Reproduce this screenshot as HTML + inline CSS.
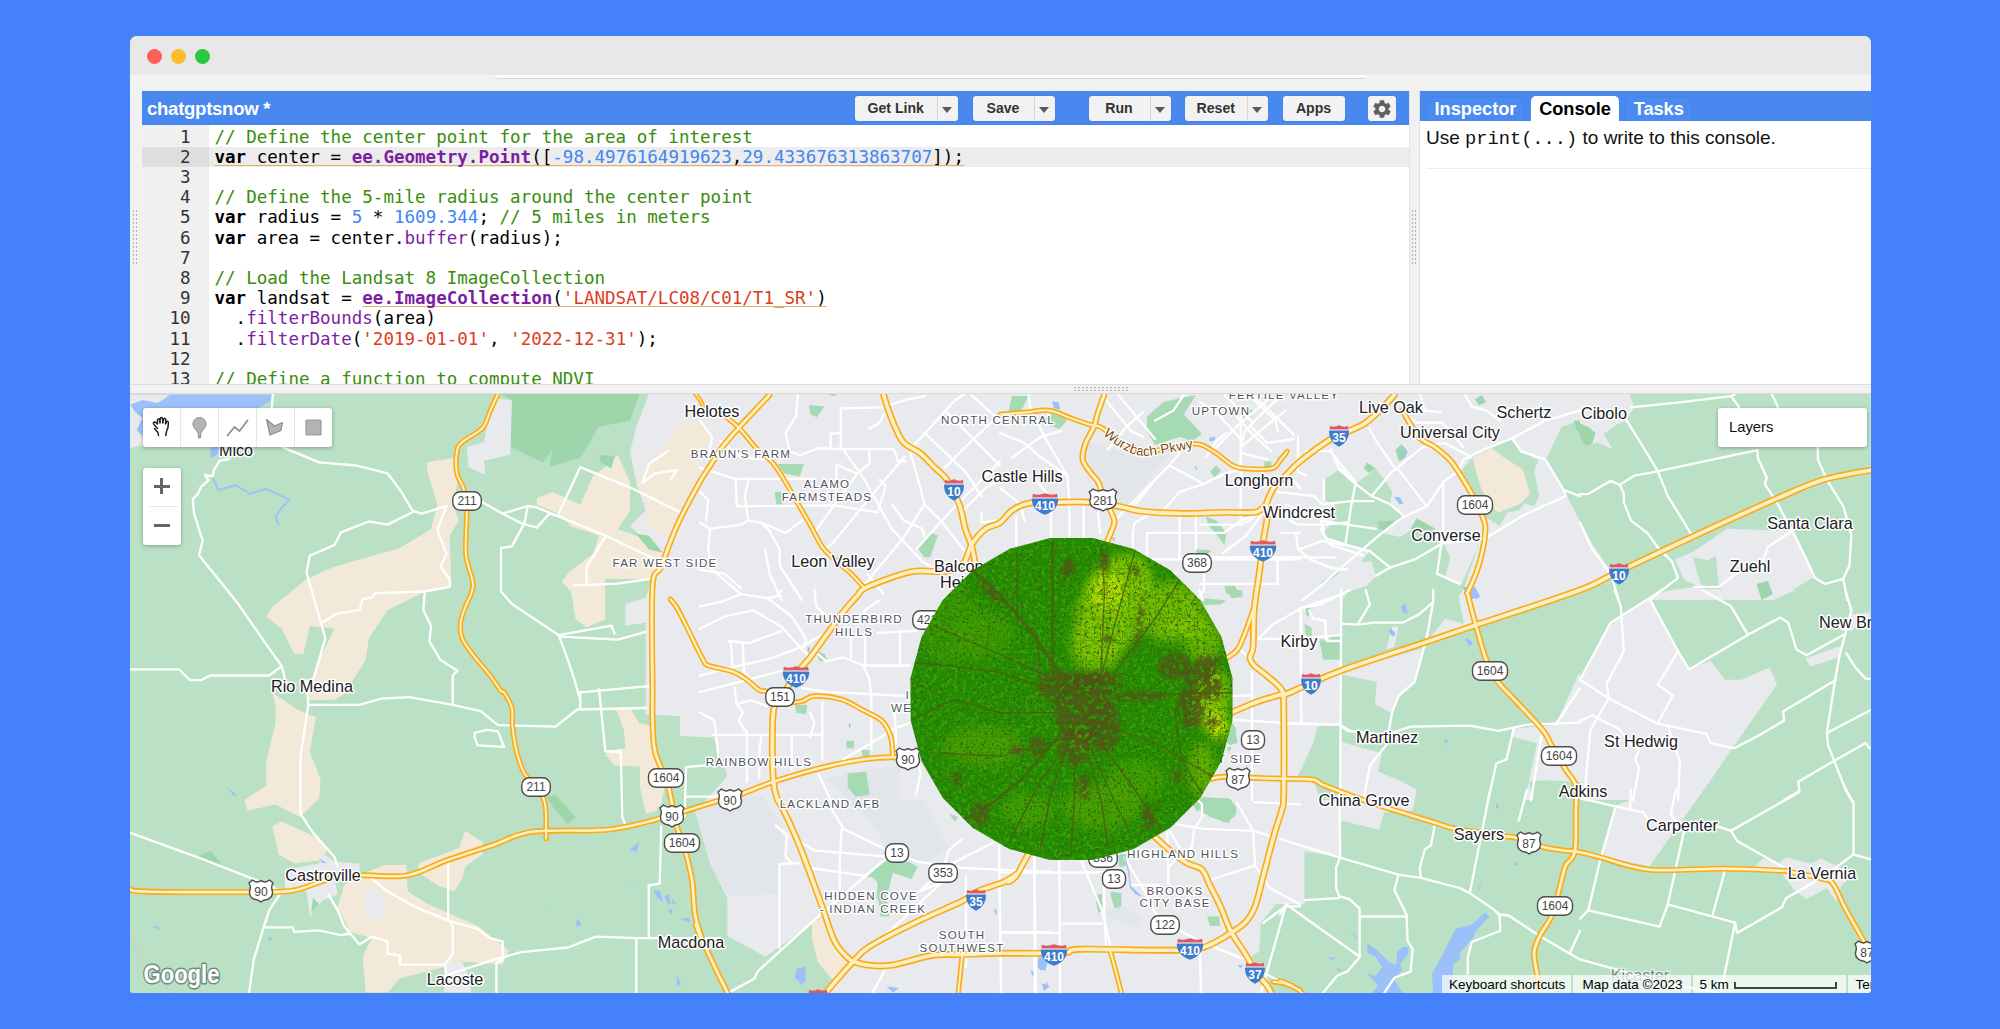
<!DOCTYPE html>
<html><head><meta charset="utf-8"><title>Earth Engine Code Editor</title>
<style>
*{box-sizing:border-box}
html,body{margin:0;padding:0}
body{width:2000px;height:1029px;overflow:hidden;background:#4481fa;font-family:"Liberation Sans",sans-serif;position:relative}
.abs{position:absolute}
#win{position:absolute;left:129.5px;top:36px;width:1741px;height:957px;border-radius:7px 7px 4px 4px;overflow:hidden;background:#f1f1f1}
#titlebar{position:absolute;left:0;top:0;width:100%;height:39px;background:#e8e8e8}
.tl{position:absolute;top:13px;width:15px;height:15px;border-radius:50%}
#urlbar{position:absolute;left:365.5px;top:38.5px;width:871px;height:4.2px;border-radius:0 0 9px 9px;background:#fff;border-bottom:1px solid #d6d6d6;}
#strip{position:absolute;left:0;top:39px;width:100%;height:15px;background:#f2f2f2}
#lhead{position:absolute;left:12px;top:54.5px;width:1267px;height:34.5px;background:#4888ef}
#lhead .title{position:absolute;left:5.5px;top:7.5px;font-weight:bold;font-size:18.6px;color:#fff;letter-spacing:-0.3px}
.btn{position:absolute;top:5px;height:25.5px;background:#f2f2f2;border-radius:3px;font-weight:bold;font-size:14.1px;color:#333;line-height:25.5px;box-shadow:0 0 1px rgba(0,0,0,.25)}
.btn span.t{position:absolute;left:0;top:0;text-align:center}
.btn i.d{position:absolute;top:0;width:1px;height:100%;background:#d4d4d4}
.btn i.a{position:absolute;top:11px;width:0;height:0;border-left:5px solid transparent;border-right:5px solid transparent;border-top:6px solid #5a5a5a}
#code{position:absolute;left:12px;top:89px;width:1267px;height:259px;background:#fff;overflow:hidden}
#gutter{position:absolute;left:0;top:0;width:67px;height:100%;background:#f0f0f0}
#activeline{position:absolute;left:67px;top:21.5px;width:1200px;height:20.2px;background:#ececec}
#activegut{position:absolute;left:0;top:21.5px;width:67px;height:20.2px;background:#dedede}
pre{margin:0}
#nums{position:absolute;left:0;top:1.6px;width:49px;text-align:right;font-family:"DejaVu Sans Mono",monospace;font-size:17.54px;line-height:20.2px;color:#333}
#src{position:absolute;left:73px;top:1.6px;font-family:"DejaVu Sans Mono",monospace;font-size:17.54px;line-height:20.2px;color:#000}
.c{color:#388d0b}.k{font-weight:bold}.f{color:#7b1fa2}.fb{color:#7b1fa2;font-weight:bold}.n{color:#4285f4}.s{color:#dd3c22}
.u{text-decoration:underline;text-decoration-color:#e3b25a;text-decoration-thickness:1.3px;text-underline-offset:2.2px;text-decoration-skip-ink:none}
#vsplit{position:absolute;left:1279px;top:54px;width:11.5px;height:294px;background:#f1f1f1;border-left:1px solid #e2e2e2;border-right:1px solid #e2e2e2}
#rhead{position:absolute;left:1290.5px;top:54.5px;width:451px;height:30.5px;background:#4888ef}
.tab{position:absolute;top:5.5px;height:25px;border-radius:5px 5px 0 0;font-weight:bold;font-size:18.2px;line-height:24px;text-align:center;color:#fff;background:#4b8bf0;border:1px solid #4283ec;border-bottom:none}
.tab.on{background:#fff;color:#000;border-color:#fff}
#rbody{position:absolute;left:1290.5px;top:85px;width:451px;height:263px;background:#fff}
#hsplit{position:absolute;left:0;top:348px;width:100%;height:9.5px;background:#f1f1f1;border-top:1px solid #dcdcdc;border-bottom:1px solid #dadada}
#map{position:absolute;left:0;top:357.5px;width:1741px;height:599.5px;background:#e8eaed;overflow:hidden}
.ctl{position:absolute;background:#fff;border-radius:3px;box-shadow:0 1px 4px rgba(0,0,0,.3)}
</style></head><body>
<div id="win">
 <div id="titlebar"></div>
 <div id="strip"></div>
 <div id="urlbar"></div>
 <div class="tl" style="left:17px;background:#fe5f57"></div>
 <div class="tl" style="left:41.5px;background:#febc2e"></div>
 <div class="tl" style="left:65.5px;background:#28c840"></div>
 <div id="lhead"><div class="title">chatgptsnow *</div>
  <div class="btn" style="left:713.5px;width:102.5px"><span class="t" style="width:81.5px">Get Link</span><i class="d" style="left:81.5px"></i><i class="a" style="left:87px"></i></div>
  <div class="btn" style="left:831px;width:82px"><span class="t" style="width:61px">Save</span><i class="d" style="left:61px"></i><i class="a" style="left:66.5px"></i></div>
  <div class="btn" style="left:947px;width:82px"><span class="t" style="width:61px">Run</span><i class="d" style="left:61px"></i><i class="a" style="left:66.5px"></i></div>
  <div class="btn" style="left:1043.5px;width:82.5px"><span class="t" style="width:61.5px">Reset</span><i class="d" style="left:61.5px"></i><i class="a" style="left:67px"></i></div>
  <div class="btn" style="left:1141px;width:62px"><span class="t" style="width:62px">Apps</span></div>
  <div class="btn" style="left:1226px;width:28px"><svg class="abs" style="left:3px;top:2px" width="22" height="22" viewBox="0 0 24 24"><path fill="#5f5f5f" d="M19.14 12.94c.04-.3.06-.61.06-.94 0-.32-.02-.64-.07-.94l2.03-1.58a.49.49 0 0 0 .12-.61l-1.92-3.32a.488.488 0 0 0-.59-.22l-2.39.96c-.5-.38-1.03-.7-1.62-.94l-.36-2.54a.484.484 0 0 0-.48-.41h-3.84c-.24 0-.43.17-.47.41l-.36 2.54c-.59.24-1.13.57-1.62.94l-2.39-.96c-.22-.08-.47 0-.59.22L2.74 8.87c-.12.21-.08.47.12.61l2.03 1.58c-.05.3-.09.63-.09.94s.02.64.07.94l-2.03 1.58a.49.49 0 0 0-.12.61l1.92 3.32c.12.22.37.29.59.22l2.39-.96c.5.38 1.03.7 1.62.94l.36 2.54c.05.24.24.41.48.41h3.84c.24 0 .44-.17.47-.41l.36-2.54c.59-.24 1.13-.56 1.62-.94l2.39.96c.22.08.47 0 .59-.22l1.92-3.32c.12-.22.07-.47-.12-.61l-2.01-1.58zM12 15.6c-1.98 0-3.6-1.62-3.6-3.6s1.62-3.6 3.6-3.6 3.6 1.62 3.6 3.6-1.62 3.6-3.6 3.6z"/></svg></div>
 </div>
 <div id="code">
  <div id="gutter"></div><div id="activeline"></div><div id="activegut"></div>
<pre id="nums">1
2
3
4
5
6
7
8
9
10
11
12
13</pre>
<pre id="src"><span class="c">// Define the center point for the area of interest</span>
<span class="u"><span class="k">var</span> center = <span class="fb">ee.Geometry.Point</span>([<span class="n">-98.4976164919623</span>,<span class="n">29.433676313863707</span>]);</span>

<span class="c">// Define the 5-mile radius around the center point</span>
<span class="k">var</span> radius = <span class="n">5</span> * <span class="n">1609.344</span>; <span class="c">// 5 miles in meters</span>
<span class="k">var</span> area = center.<span class="f">buffer</span>(radius);

<span class="c">// Load the Landsat 8 ImageCollection</span>
<span class="k">var</span> landsat = <span class="u"><span class="fb">ee.ImageCollection</span>(<span class="s">'LANDSAT/LC08/C01/T1_SR'</span>)</span>
  .<span class="f">filterBounds</span>(area)
  .<span class="f">filterDate</span>(<span class="s">'2019-01-01'</span>, <span class="s">'2022-12-31'</span>);

<span class="c">// Define a function to compute NDVI</span></pre>
 </div>
 <div id="vsplit"></div>
 <div id="rhead">
  <div class="tab" style="left:6px;width:99px">Inspector</div>
  <div class="tab on" style="left:111px;width:88px">Console</div>
  <div class="tab" style="left:204.5px;width:68.5px">Tasks</div>
 </div>
 <div id="rbody">
  <div class="abs" style="left:6px;top:6px;font-size:19px;white-space:nowrap;color:#111">Use <span style="font-family:'Liberation Mono',monospace;font-size:18.7px">print(...)</span> to write to this console.</div>
  <div class="abs" style="left:6px;top:47px;width:445px;height:1px;background:#ececec"></div>
 </div>
 <div id="hsplit"></div>
 <div class="abs" style="left:943px;top:350px;width:56px;height:6px;background-image:radial-gradient(circle,#b4b4b4 0.9px,transparent 1.1px);background-size:4px 3px"></div>
 <div class="abs" style="left:2.5px;top:173px;width:6px;height:56px;background-image:radial-gradient(circle,#b4b4b4 0.9px,transparent 1.1px);background-size:3px 4px"></div>
 <div class="abs" style="left:1281.5px;top:173px;width:6px;height:56px;background-image:radial-gradient(circle,#b4b4b4 0.9px,transparent 1.1px);background-size:3px 4px"></div>
 <div id="map">
<svg class="abs" style="left:-129.5px;top:-393.5px" width="2000" height="1029" viewBox="0 0 2000 1029">
<g id="land">
<polygon points="120,394 648.8,394 636.3,426.7 630.1,451.5 636.3,482.6 645.7,510.6 630.1,526.2 661.2,554.2 651.9,579.1 645.7,597.7 625.4,604 625.4,625.7 645.7,622.6 645.7,714.4 679.9,715.9 679.9,736.1 720,737.7 712.9,736.4 727.4,775.8 695.4,812.2 710,863.2 727.4,898.2 727.4,936.1 765.3,956.5 812,924.4 814.9,918.6 826.5,918.6 849.9,962.3 826.5,992.9 120,994.3" fill="#bae1c6"/>
<polygon points="129.7,394.7 171,394.7 157.5,418 142.5,445 129.7,448" fill="#e8eaed"/>
<polygon points="169.5,394.7 271.5,394.7 270,401.5 261,406 255,410.5 225,412 195,410.5 183,415 169.5,412 157.5,418 150,430 142.5,436 136.5,430 142.5,418 135,412 130.5,404.5 142.5,400 157.5,403 165,398.5" fill="#9cc0f9"/>
<polygon points="210,445.7 219.7,445.7 219,454 210.7,458.5" fill="#9cc0f9"/>
<polygon points="501,394 639.4,394 630.1,420.4 599,426.7 580.3,457.8 549.2,467.1 552.3,450 543,462.4 510.4,446.9 511.9,400.2" fill="#9ed5ab"/>
<polygon points="497.9,398.7 511.9,400.2 510.4,454.7 483.9,460.9 485.5,474.9 468.4,467.1 466.8,446.9 483.9,442.2 487,426.7" fill="#e8eaed"/>
<polygon points="426.4,462.4 454.4,457.8 457.5,482.6 452.8,504.4 459,520 449.7,535.5 451.3,585.3 424.8,591.5 387.5,610.2 368.8,638.2 365.7,659.9 344,694.2 334.6,700.1 306.6,700.1 319.1,659.9 334.6,628.8 309.7,625.7 303.5,653.7 294.2,653.7 281.7,628.8 266.2,616.4 272.4,607.1 306.6,579.1 334.6,566.6 356.4,560.4 399.9,548 431,529.3 437.3,504.4 427.9,473.3" fill="#f3e9d8"/>
<polygon points="536.8,498.2 552.3,492 580.3,504.4 592.8,476.4 605.2,467.1 617.7,454.7 630.1,482.6 630.1,510.6 617.7,529.3 636.3,535.5 664.3,554.2 655,579.1 605.2,579.1 605.2,619.5 586.6,627.3 575.7,619.5 571,591.5 561.7,582.2 567.9,572.8 592.8,554.2 599,535.5 571,526.2 558.6,513.7 536.8,504.4" fill="#f3e9d8"/>
<polygon points="679.9,420.4 707.9,426.7 709.4,439.1 698.5,460.9 695.4,482.6 679.9,504.4 683,526.2 664.3,535.5 648.8,526.2 645.7,498.2 636.3,485.8 648.8,464 667.4,442.2" fill="#f3e9d8"/>
<polygon points="636.3,534 648.8,535.5 662.8,552.6 648.8,549.5" fill="#9ed5ab"/>
<polygon points="599,454.7 614.6,456.2 611.4,468.6 600.6,462.4" fill="#9ed5ab"/>
<polygon points="272.4,692.4 297.3,709.5 316,717.3 309.7,751.5 320.6,779.5 319.1,798.2 300.4,816.9 275.5,804.4 247.5,810.6 244.4,799.8 266.2,785.8 266.2,760.9 275.5,723.5 275.5,704.9" fill="#f3e9d8"/>
<polygon points="272.4,826.2 281.7,821.5 319.1,838.6 326.8,851.1 319.1,860.4 294.2,863.5 278.6,854.2" fill="#f3e9d8"/>
<polygon points="418.6,863.5 459,848 465.3,830.9 482.4,841.7 482.4,854.2 465.3,866.6 462.1,879.1 454.4,891.5 437.3,885.3 418.6,872.8" fill="#f3e9d8"/>
<polygon points="365.7,872.8 384.4,865.1 406.2,865.1 407.7,891.5 427.9,904 455.9,916.4 477.7,925.7 493.3,938.2 508.8,950.6 502.6,964.6 462.1,961.5 446.6,966.2 399.9,978.6 387.5,992.6 365.7,992.6 362.6,956.8 371.9,938.2 350.2,931.9 337.7,907.1 344,885.3" fill="#f3e9d8"/>
<polygon points="616.1,709.5 630.1,708 648.8,739.1 658.1,760.9 667.4,773.3 661.2,804.4 648.8,813.7 645.7,804.4 655,782.6 648.8,767.1 614.6,765.5 605.2,754.7 611.4,750 625.4,748.4 623.9,729.8" fill="#f3e9d8"/>
<polygon points="284.9,869.7 319.1,863.5 322.2,852.6 334.6,862 359.5,863.5 359.5,876 334.6,879.1 337.7,894.6 322.2,900.8 309.7,916.4 306.6,891.5 284.9,888.4" fill="#e8eaed"/>
<polygon points="364.2,890 375.1,889 385.9,897.7 382.8,919.5 364.2,917.9" fill="#e8eaed"/>
<polygon points="445,963 462.1,961.5 468.4,975.5 471.5,992.6 443.5,992.6 446.6,978.6" fill="#e8eaed"/>
<polygon points="546.1,796.6 555.5,795.1 575.7,816.9 567.9,824.6 555.5,810.6" fill="#9ed5ab"/>
<polygon points="199.3,855.7 210.2,851.1 222.6,865.1 213.3,862" fill="#9ed5ab"/>
<polygon points="312.8,897.7 319.1,904 311.3,913.3" fill="#9ed5ab"/>
<polygon points="630.1,849.5 639.4,841.7 636.3,852.6" fill="#9cc0f9"/>
<polygon points="653.4,891.5 659.7,890 662.8,902.4" fill="#9cc0f9"/>
<polygon points="664.3,896.2 669.9,894.6 669,905.5" fill="#9cc0f9"/>
<polygon points="672.1,899.3 676.8,904 671.2,903.3" fill="#9cc0f9"/>
<polygon points="679.9,919.5 689.2,917.9 690.8,922.6" fill="#9cc0f9"/>
<polygon points="577.2,917.9 581.9,925.7 575.7,925.7" fill="#9cc0f9"/>
<polygon points="544.6,908.6 553.9,911.7 549.2,909.5" fill="#9cc0f9"/>
<polygon points="151.1,925.7 159.8,927.3 158.9,929.5" fill="#9cc0f9"/>
<polygon points="227.3,787.3 236.6,795.1 233.5,795.7" fill="#9cc0f9"/>
<polygon points="676.8,977 681.4,984.8 677.4,986.4" fill="#9cc0f9"/>
<polygon points="267.7,937.5 271.8,936.6 270.9,941.9" fill="#9cc0f9"/>
<polygon points="627,885.3 637.9,887.8 630.1,886.5" fill="#9cc0f9"/>
<polygon points="319.1,857.9 326.8,863.5 322.2,862.9" fill="#9cc0f9"/>
<polygon points="812,921.5 826.5,917.1 844,956.5 849.9,962.3 832.4,979.8 817.8,962.3 812,939" fill="#f3e9d8"/>
<polygon points="640,723.3 651.7,726.2 657.5,758.3 651.7,787.4 657.5,810.8 645.8,813.7 640,787.4" fill="#f3e9d8"/>
<polygon points="695.4,812.2 736.2,796.2 762.4,796.2 779.9,822.4 785.7,857.4 779.9,863.2 779.3,893.8 728.9,896.7 710,863.2" fill="#e2e5ea"/>
<polygon points="884.8,767 900,767 900,851.6 881.9,837 870.3,822.4 844,796.2 826.5,778.7" fill="#e2e5ea"/>
<polygon points="653.1,889.4 660.4,893.8 663.3,901.1 657.5,898.2" fill="#9cc0f9"/>
<polygon points="664.8,895.3 669.1,898.2 670.6,904 666.8,902.6" fill="#9cc0f9"/>
<polygon points="667.7,911.3 672.6,908.4 671.5,914.2" fill="#9cc0f9"/>
<polygon points="683.7,917.1 689.5,920.1 688.1,923" fill="#9cc0f9"/>
<polygon points="676.4,975.4 680.8,982.7 677.3,985.6" fill="#9cc0f9"/>
<polygon points="795.9,972.5 804.7,966.7 806.1,979.8 800.3,985.6" fill="#9cc0f9"/>
<polygon points="808.9,404.9 824.4,406.4 816.6,417.3 810.4,414.2" fill="#a5dab3"/>
<polygon points="777.8,464 804.2,464 799.5,476.4 784,473.3" fill="#a5dab3"/>
<polygon points="774.7,492 784,492 782.4,504.4 776.2,504.4" fill="#a5dab3"/>
<polygon points="917.7,548 930.2,532.4 937.9,535.5 930.2,557.3 924,557.3" fill="#a5dab3"/>
<polygon points="815.1,650.6 824.4,653.7 827.5,659.9 819.8,661.5" fill="#a5dab3"/>
<polygon points="827.5,394 836.9,394 833.7,396.2" fill="#a5dab3"/>
<polygon points="700,426.7 709.3,432.9 706.2,445.3 700,446.9" fill="#f3e9d8"/>
<polygon points="807.3,646.9 810.4,647.5 808.2,653.1" fill="#9cc0f9"/>
<polygon points="1087.8,443.1 1114.3,449.2 1142.9,459.4 1173.5,451.2 1155.1,471.6 1142.9,488 1130.6,504.3 1118.4,506.3 1114.3,492 1098,479.8 1085.7,459.4" fill="#e2e5ea"/>
<polygon points="1146.9,416.5 1163.3,402.2 1179.6,398.2 1195.9,395.1 1183.7,414.5 1202,433.9 1191.8,441 1179.6,436.9 1155.1,445.1 1146.9,430.8" fill="#a5dab3"/>
<polygon points="1040.8,422.7 1053.1,412.4 1067.3,420.6 1059.2,428.8" fill="#a5dab3"/>
<polygon points="1012.2,396.1 1028.6,396.1 1020.4,412.4 1008.2,412.4" fill="#a5dab3"/>
<polygon points="1210.2,471.6 1216.3,465.5 1221.4,470.6 1214.3,477.8" fill="#a5dab3"/>
<polygon points="1206.1,516.5 1216.3,520.6 1226.5,532.9 1224.5,545.1 1218.4,536.9 1208.2,524.7" fill="#a5dab3"/>
<polygon points="1264.3,461.4 1271.4,461.4 1271.4,467.6 1264.3,467.6" fill="#a5dab3"/>
<polygon points="1195.9,549.2 1212.2,550.2 1206.1,555.3 1196.9,554.3" fill="#a5dab3"/>
<polygon points="1224.5,585.9 1234.7,585.9 1240.8,596.1 1226.5,594.1" fill="#a5dab3"/>
<polygon points="1242.9,412.4 1253.1,409.4 1251,416.5 1243.9,420.6" fill="#a5dab3"/>
<polygon points="1110.2,536.9 1115.3,538 1114.3,542" fill="#a5dab3"/>
<polygon points="1052,401.2 1058.2,402.2 1060.2,409.4 1054.1,408.4" fill="#9cc0f9"/>
<polygon points="1209.2,438 1215.3,436.5 1214.7,440.6 1209.8,441.4" fill="#9cc0f9"/>
<polygon points="1193.9,465.1 1197.6,468.6 1196.3,470" fill="#9cc0f9"/>
<polygon points="794.9,704.9 807.3,704.9 805.8,714.2 796.4,712.7" fill="#a5dab3"/>
<polygon points="846.2,740.7 854,740.7 854,748.4 846.8,748.4" fill="#a5dab3"/>
<polygon points="861.7,750 869.5,750 869.5,756.2 862.4,756.2" fill="#a5dab3"/>
<polygon points="847.7,773.3 866.4,771.8 869.5,795.1 855.5,796.6 847.7,787.3" fill="#a5dab3"/>
<polygon points="868,872.8 889.7,858.8 917.7,866.6 911.5,879.1 892.8,872.8 886.6,897.7 889.7,916.4 880.4,916.4 877.3,882.2" fill="#a5dab3"/>
<polygon points="1200.8,798.2 1228.8,798.2 1236.5,807.5 1228.8,823.1 1210.1,816.9 1200.8,810.6" fill="#a5dab3"/>
<polygon points="1095,894.6 1101.2,894.6 1102.8,910.2 1098.1,913.3" fill="#a5dab3"/>
<polygon points="1110.6,891.5 1119.9,893.1 1121.5,907.1 1115.2,910.2" fill="#a5dab3"/>
<polygon points="1207,916.4 1219.4,916.4 1219.4,925.7 1210.1,925.7" fill="#a5dab3"/>
<polygon points="1228.8,717.3 1236.5,729.8 1231.9,745.3 1225.7,742.2" fill="#a5dab3"/>
<polygon points="1119.9,854.2 1126.1,854.2 1124.6,866.6 1118.4,866.6" fill="#a5dab3"/>
<polygon points="1191.4,802.9 1200.8,802.9 1197.7,812.2" fill="#a5dab3"/>
<polygon points="948.8,813.7 958.2,816.9 955.1,821.5" fill="#a5dab3"/>
<polygon points="1259.9,925.7 1278.5,904 1300,907.1 1300,992.6 1278.5,992.6 1256.8,959.9 1269.2,944.4" fill="#bae1c6"/>
<polygon points="848.7,723.5 850.9,724.2 849.3,729.8" fill="#9cc0f9"/>
<polygon points="1039,956.8 1048.4,958.4 1045.3,970.8 1037.5,967.7" fill="#9cc0f9"/>
<polygon points="1031.3,970.8 1035.9,972.4 1032.8,976.1" fill="#9cc0f9"/>
<polygon points="1129.2,885.3 1133.9,888.4 1141.7,896.2 1135.5,894.6" fill="#9cc0f9"/>
<polygon points="993.9,909.5 997,910.2 996.1,915.8" fill="#9cc0f9"/>
<polygon points="886.6,986.4 899.1,987.9 892.8,992.6" fill="#9cc0f9"/>
<polygon points="1042.1,983.3 1049.9,986.4 1043.7,991" fill="#9cc0f9"/>
<polygon points="796.4,969.3 805.8,966.2 804.2,983.3 794.9,978.6" fill="#9cc0f9"/>
<polygon points="1459.6,473.7 1471.8,457.3 1492.2,448.2 1510.6,439 1520.8,451.2 1538.2,460.4 1547.3,457.3 1561.6,426.7 1580,420.6 1580,423.7 1588.2,426.7 1595.3,432.9 1592.2,445.1 1596.3,442 1612.7,449.2 1603.5,433.9 1616.7,424.7 1626.9,420.6 1634.1,406.3 1629,394.1 1870.8,394.1 1870.8,993.1 1280,993.1 1280,904.3 1304.5,904.3 1304.5,851.2 1340.2,857.3 1341.2,820.6 1379,829.8 1384.1,812.4 1412.7,810.4 1416.7,790 1402.4,781.8 1378,771.6 1382,753.3 1341.2,742 1341.2,659.4 1322.9,659.4 1319.8,639 1341.2,639 1343.3,590 1343.3,600 1347.3,592 1366.7,585.9 1375.9,575.7 1371.8,561.4 1360.6,561.4 1369.8,551.2 1347.3,545.1 1329,539 1323.9,530.8 1333.1,522.7 1335.1,504.3 1323.9,500.2 1323.9,479.8 1339.2,469.6 1355.5,483.9 1371.8,471.6 1375.9,469.6 1386.1,481.8 1392.2,492 1390.2,504.3 1404.5,516.5 1400.4,520.6 1390.2,524.7 1382,532.9 1400.4,536.9 1412.7,528.8 1416.7,518.6 1435.1,528.8 1435.1,541 1443.3,543.1 1450.4,557.3 1445.3,577.8 1461.6,583.9 1484.1,532.9 1486.1,517.6 1475.9,504.3 1469.8,488" fill="#bae1c6"/>
<polygon points="1538.2,460.9 1544.4,457.8 1566.2,495.1 1591,541.7 1609.7,569.7 1619,574.4 1472.8,628.8 1460.4,599.3 1469.1,572.8 1477.8,548 1481.6,526.2 1482.2,510.6" fill="#e8eaed"/>
<polygon points="1341.2,671.6 1422.9,648.2 1420.8,659.4 1414.7,681.8 1398.4,696.1 1392.2,713.5 1374.9,704.3 1376.9,681.8 1341.2,674.7" fill="#e8eaed"/>
<polygon points="1386.1,649.2 1392.2,626.7 1398.4,626.7 1394.3,647.1" fill="#e8eaed"/>
<polygon points="1430,638 1445.3,618.6 1463.7,623.7 1458.6,596.1 1463.7,590 1575.9,590 1473.9,625.7" fill="#e8eaed"/>
<polygon points="1555.5,724.7 1580,671.6 1580,774.7 1568.8,777.8 1529,781.8 1533.1,800 1524.9,800 1537.1,743.1 1512.7,736.9 1512.7,728.8" fill="#e8eaed"/>
<polygon points="1649.4,598.2 1678,651.2 1689.2,669.6 1710.6,660.4 1724.9,679.8 1741.2,679.8 1769.8,667.6 1776.9,683.9 1771.8,692 1696.3,800 1580,800 1580,677.8 1610.6,622.7" fill="#e8eaed"/>
<polygon points="1606.5,790 1702.4,790 1649.4,866.5 1602.4,856.3 1615.7,806.3 1630,808.4 1632,798.2 1606.5,795.1" fill="#e8eaed"/>
<polygon points="1556.8,720.4 1591,715.8 1609.7,698.7 1609.7,680 1715.5,680 1715.5,773.3 1650.1,865.1 1603.5,854.2 1614.4,806 1631.5,799.8 1591,782.6 1531.9,779.5 1541.3,736" fill="#e8eaed"/>
<polygon points="1720.8,590 1759.6,590 1763.7,598.2 1753.5,599.2 1726.9,599.2" fill="#e8eaed"/>
<polygon points="1778,590 1796.3,590 1782,596.1" fill="#e8eaed"/>
<polygon points="1805.5,658.4 1843.3,645.1 1839.2,657.3 1810.6,666.5" fill="#e8eaed"/>
<polygon points="1839.2,630.8 1849.4,614.5 1869.8,612.4 1869.8,616.5 1851.4,630.8" fill="#e8eaed"/>
<polygon points="1726.9,528.8 1792.2,530.8 1804.5,553.3 1812.7,577.8 1782,596.1 1773.9,600 1726.9,600 1720.8,588 1702.4,588 1684.1,579.8 1674.9,559.4 1694.3,551.2" fill="#e8eaed"/>
<polygon points="1693.3,557.3 1708.6,560.4 1715.7,555.3 1718.8,585.9 1702.4,588 1697.3,573.7" fill="#bae1c6"/>
<polygon points="1756.5,583.9 1767.8,580.8 1772.9,594.1 1761.6,600" fill="#9ed5ab"/>
<polygon points="1580,522.7 1592.2,549.2 1610.6,569.6 1580,581.8" fill="#e8eaed"/>
<polygon points="1647.3,600 1665.7,591 1694.3,586.9 1702.4,589 1720.8,589 1726.9,600" fill="#e8eaed"/>
<polygon points="1580,423.7 1588.2,426.7 1595.3,432.9 1592.2,443.1 1586.1,446.1 1580,436.9" fill="#9ed5ab"/>
<polygon points="1775.9,496.1 1791.2,488 1795.3,491 1779,501.2" fill="#9ed5ab"/>
<polygon points="1753.5,867.6 1763.7,858.4 1778,863.5 1786.1,857.3 1810.6,863.5 1820.8,858.4 1853.5,873.7 1841.2,885.9 1836.1,901.2 1826.9,888 1806.5,899.2 1794.3,890 1782,873.7" fill="#e8eaed"/>
<polygon points="1459.6,473.7 1471.8,457.3 1492.2,448.2 1510.6,439 1520.8,451.2 1538.2,460.4 1534.1,471.6 1539.2,496.1 1534.1,506.3 1524.9,503.3 1518.8,510.4 1507.6,512.4 1499.4,525.7 1486.1,517.6 1475.9,504.3 1469.8,488" fill="#bae1c6"/>
<polygon points="1472.9,457.3 1492.2,448.2 1503.5,457.3 1522.9,469.6 1530,494.1 1519.8,504.3 1498.4,512.4 1490.2,506.3 1481,488 1475.9,471.6" fill="#f3e9d8"/>
<polygon points="1573.9,420.6 1580,420.6 1580,432.9 1576.9,430.8" fill="#9ed5ab"/>
<polygon points="1395.3,450.2 1401.4,444.1 1407.6,451.2 1405.5,457.3 1399.4,461.4" fill="#9ed5ab"/>
<polygon points="1363.7,468.6 1366.7,462.4 1375.9,468.6 1368.8,472.7" fill="#9ed5ab"/>
<polygon points="1378,521.6 1394.3,520.6 1386.1,530.8 1379,528.8" fill="#9ed5ab"/>
<polygon points="1410.6,528.8 1416.7,518.6 1435.1,528.8 1422.9,530.8" fill="#9ed5ab"/>
<polygon points="1320.8,582.9 1338.2,570.6 1339.2,572.7 1322.9,584.9" fill="#9ed5ab"/>
<polygon points="1474.9,399.2 1482,395.1 1486.1,402.2 1479,405.3" fill="#9ed5ab"/>
<polygon points="1400.4,450.2 1406.5,451.2 1403.5,458.4" fill="#9cc0f9"/>
<polygon points="1394.3,497.1 1399.4,497.1 1403.5,503.3 1399.4,504.3" fill="#9cc0f9"/>
<polygon points="1462.7,586.9 1474.9,586.9 1480,596.1 1469.8,600" fill="#9cc0f9"/>
<polygon points="1298.4,775.7 1320.8,725.7 1339.2,726.7 1339.2,800 1320.8,800 1312.7,778.8" fill="#bae1c6"/>
<polygon points="1306.5,606.3 1310.6,607.3 1308.6,616.5 1305.5,614.5" fill="#a5dab3"/>
<polygon points="1304.5,623.7 1311.6,627.8 1311.6,636.9 1305.5,633.9" fill="#a5dab3"/>
<polygon points="1400.4,607.3 1405.5,603.3 1407.6,613.5 1403.5,612.4" fill="#9cc0f9"/>
<polygon points="1388.2,630.8 1391.2,628.8 1395.9,633.9 1392.7,636.9" fill="#9cc0f9"/>
<polygon points="1464.7,639 1467.8,638 1472.9,643.1 1469.8,646.1" fill="#9cc0f9"/>
<polygon points="1470.8,590 1475.9,590 1480,597.1 1475.9,599.2" fill="#9cc0f9"/>
<polygon points="1443.3,739 1447.8,740 1446.9,745.5" fill="#9cc0f9"/>
<polygon points="1485.1,912.4 1489.2,916.5 1475.9,930.8 1473.9,936.9 1459.6,953.3 1460.6,959.4 1453.5,963.5 1451.4,993.1 1433.1,993.1 1432,973.7 1441.2,957.3 1449.4,941 1455.5,928.8 1471.8,924.7" fill="#9cc0f9"/>
<polygon points="1366.7,943.1 1375.9,949.2 1388.2,961.4 1396.3,965.5 1397.3,952.2 1402.4,947.1 1408.6,947.1 1407.6,955.3 1400.4,963.5 1402.4,969.6 1394.3,979.8 1402.4,993.1 1371.8,993.1 1378,985.9 1367.8,973.7 1375.9,975.7 1382,967.6 1375.9,957.3 1367.8,953.3" fill="#9cc0f9"/>
<polygon points="1496.3,802.2 1499.4,808.4 1495.9,808" fill="#9cc0f9"/>
<polygon points="1514.7,860.4 1518.8,865.1 1514.7,865.1" fill="#9cc0f9"/>
<polygon points="1482,881.8 1479,891 1478,890" fill="#9cc0f9"/>
<polygon points="1326.9,957.3 1335.1,957.3 1333.5,960.4" fill="#9cc0f9"/>
<polygon points="1336.1,968 1341.2,969.6 1339.2,972" fill="#9cc0f9"/>
<polygon points="1349.4,929.8 1357.6,939 1355.5,939" fill="#9cc0f9"/>
<polygon points="1305.1,607.3 1311.2,607.3 1308.2,616.5" fill="#a5dab3"/>
<polygon points="1305.1,624.7 1311.2,628.8 1311.2,636.9 1306.1,634.9" fill="#a5dab3"/>
<polygon points="1319.4,641 1339.8,641 1339.8,659.4 1323.5,659.4" fill="#a5dab3"/>
<polygon points="1327.6,636.9 1341.8,635.9 1341.8,644.1" fill="#a5dab3"/>
<polygon points="1229.6,732.9 1235.7,732.9 1237.8,743.1 1229.6,745.1" fill="#a5dab3"/>
<polygon points="1201,598.2 1225.5,600.2 1221.4,604.3 1203.1,605.3" fill="#a5dab3"/>
<polygon points="1227.6,590 1241.8,590 1242.9,597.1 1231.6,598.2" fill="#a5dab3"/>
<polygon points="1227.6,747.1 1231.6,747.1 1228.6,753.3" fill="#a5dab3"/>
<polygon points="1191.8,802.2 1204.1,797.1 1230.6,799.2 1236.7,810.4 1234.7,816.5 1224.5,822.7 1216.3,816.5 1202,812.4" fill="#a5dab3"/>
<polygon points="1094.9,896.1 1102,894.1 1102,912.4" fill="#a5dab3"/>
<polygon points="1110.2,894.1 1121.4,893.1 1121.4,906.3 1115.3,909.4" fill="#a5dab3"/>
<polygon points="1208.2,917.6 1218.4,916.5 1220.4,925.7 1210.2,925.7" fill="#a5dab3"/>
<polygon points="1118.4,855.3 1124.5,855.3 1126.5,865.5 1119.4,866.5" fill="#a5dab3"/>
<polygon points="1317.3,726.7 1339.8,724.7 1339.8,745.1 1313.3,775.7 1296.9,776.7 1311.2,753.3" fill="#bae1c6"/>
<polygon points="1106.1,910.4 1122.4,906.3 1140.8,916.5 1138.8,928.8 1122.4,920.6 1106.1,918.6" fill="#e2e5ea"/>
<polygon points="1251,957.3 1259.2,951.2 1261.2,922.7 1275.5,904.3 1300,905.3 1300,993.1 1273.5,993.1 1265.3,973.7" fill="#bae1c6"/>
<polygon points="1037.8,958.4 1042.9,957.3 1043.9,969.6 1039.8,970.6" fill="#9cc0f9"/>
<polygon points="1030.6,971.6 1034.7,972.7 1032.7,976.7" fill="#9cc0f9"/>
<polygon points="1046.9,980.8 1043.9,990 1048,985.9" fill="#9cc0f9"/>
<polygon points="1237.8,965.5 1242.9,965.1 1240.4,968.6" fill="#9cc0f9"/>
<polygon points="866.9,876.8 886.3,860.3 909.7,862.2 917.4,867.1 911.6,875.8 896.1,868 888.3,871.9 886.3,893.3 884.4,914.7 876.6,897.2 878.6,877.8" fill="#a5dab3"/>
<polygon points="865,800 923.3,800 948.6,848.6 923.3,864.2 884.4,848.6 876.6,823.3" fill="#e2e5ea"/>
</g>
<g fill="none" stroke="#fff" stroke-width="2.3" stroke-linecap="round" stroke-linejoin="round">
<path d="M281.7 446.9 L319.1 462.4 L356.4 465.5 L387.5 473.3 L401.5 492 L412.4 510.6 L421.7 513.7 L446.6 506"/>
<path d="M229.2 459 L219.5 460.9 L213.6 470.5 L212.7 476.4 L204.9 474.9 L208.6 480.2 L200.9 487 L198.1 493.8 L192.8 499.1 L194 513.4 L202.7 540.5 L199 555.1 L205.5 563.5 L213.3 572.8 L238.2 604 L266.2 644.4 L281.7 666.2 L288 691"/>
<path d="M412.4 512.2 L387.5 524.6 L368.8 521.5 L340.8 532.4 L334.6 544.9 L309.7 555.7 L306.6 572.8 L319.1 616.4 L325.3 638.2 L319.1 659.9 L309.7 691"/>
<path d="M446.6 506 L437.3 529.3 L446.6 554.2 L440.4 566.6 L449.7 579.1 L449.7 586.8 L424.8 591.5 L375.1 593.1 L371.9 597.7 L362.6 599.3 L359.5 610.2 L337.7 613.3 L322.2 622.6"/>
<path d="M424.8 591.5 L423.3 610.2 L431 625.7 L429.5 641.3 L440.4 659.9 L457.5 670.8 L452.8 675.5 L452.8 700.1"/>
<path d="M129.3 669.3 L179.1 669.3 L190 680.2 L200.9 680.2 L210.2 675.5 L269.3 675.5 L281.7 666.2"/>
<path d="M480.8 501.3 L502.6 513.7 L527.5 506 L536.8 507.5 L605.2 535.5 L664.3 563.5"/>
<path d="M527.5 507.5 L524.4 523.1 L511.9 546.4 L501 548 L501 591.5 L511.9 604 L558.6 635.1 L611.4 625.7 L614.6 633.5"/>
<path d="M502.6 513.7 L521.2 523.1 L536.8 527.7 L549.2 513.7 L561.7 516.9"/>
<path d="M580.3 467.1 L558.6 513.7"/>
<path d="M580.3 467.1 L633.2 488.9 L683 513.7"/>
<path d="M558.6 635.1 L567.9 659.9 L574.1 678.6 L580.3 700.1"/>
<path d="M560.1 636.6 L617.7 639.7 L645.7 631.9"/>
<path d="M574.1 585.3 L617.7 583.7 L648.8 579.1"/>
<path d="M605.2 537.1 L586.6 566.6 L586.6 583.7"/>
<path d="M273 394 L271.8 408.6"/>
<path d="M667.4 451.5 L648.8 464 L642.6 482.6 L655 473.3 L676.8 470.2 L670.5 479.5"/>
<path d="M306.6 680 L308.2 704.9 L300.4 757.8 L300.4 813.7 L312.8 832.4 L334.6 857.3 L337.7 866.6"/>
<path d="M308.2 704.9 L359.5 704.9 L381.3 698.7 L409.3 697.1 L452.8 704.9 L480.8 711.1 L497.9 725.1 L555.5 726.7 L577.2 709.5 L645.7 708"/>
<path d="M452.8 680 L452.8 704.9"/>
<path d="M129.3 832.4 L197.8 857.3 L253.7 879.1 L275.5 888.4"/>
<path d="M281.7 891.5 L269.3 910.2 L263.1 928.8 L253.7 959.9 L249.1 992.6"/>
<path d="M264.6 927.3 L292.6 927.3 L294.2 931.9 L319.1 930.4 L340.8 935.1 L350.2 933.5 L359.5 944.4 L371.9 936.6 L387.5 941.3 L387.5 953.7 L399.9 955.3 L399.9 964.6 L445 964.6"/>
<path d="M368.8 876 L387.5 891.5 L415.5 907.1 L449.7 921.1 L477.7 928.8 L490.1 938.2 L502.6 941.3 L502.6 959.9 L496.4 963 L496.4 992.6"/>
<path d="M448.1 860.4 L448.1 919.5 L452.8 925.7 L452.8 953.7 L445 964.6 L446.6 978.6"/>
<path d="M445 975.5 L493.3 959.9 L521.2 952.2 L567.9 947.5 L595.9 936.6 L636.3 938.2 L720 938.2"/>
<path d="M636.3 938.2 L636.3 992.6"/>
<path d="M605.2 751.5 L620.8 751.5 L622.3 816.9 L625.4 824.6"/>
<path d="M599 689.3 L605.2 750"/>
<path d="M580.3 692.4 L580.3 708"/>
<path d="M580.3 692.4 L648.8 686.2"/>
<path d="M648.8 885.3 L659.7 883.7 L661.2 826.2"/>
<path d="M648.8 885.3 L648.8 938.2"/>
<path d="M474.6 732.9 L487 729.8 L497.9 731.3 L504.1 746.9 L477.7 745.3 L474.6 737.5 L474.6 732.9"/>
<path d="M686.1 767.1 L720 764"/>
<path d="M686.1 767.1 L684.5 816.9"/>
<path d="M686.1 796.6 L720 796.6"/>
<path d="M328.4 894.6 L337.7 910.2 L344 925.7 L350.2 933.5"/>
<path d="M1626.9 420.6 L1657.6 470.6 L1667.8 496.1 L1694.3 539"/>
<path d="M1580 494.1 L1588.2 494.1 L1610.6 480.8 L1619.8 484.9 L1623.9 494.1 L1623.9 502.2 L1631 520.6 L1647.3 532.9 L1657.6 547.1 L1671.8 561.4 L1678 577.8 L1649.4 600"/>
<path d="M1619.8 484.9 L1634.1 475.7 L1651.4 472.7 L1722.9 457.3 L1757.6 450.2 L1757.6 457.3 L1766.7 477.8 L1764.7 483.9 L1776.9 502.2 L1782 512.4 L1792.2 530.8 L1806.5 559.4 L1814.7 577.8 L1824.9 583.9 L1843.3 578.8 L1847.3 600"/>
<path d="M1817.8 447.1 L1817.8 459.4 L1826.9 479.8 L1843.3 506.3 L1851.4 534.9 L1849.4 565.5 L1843.3 578.8"/>
<path d="M1792.2 530.8 L1767.8 547.1 L1763.7 559.4 L1735.1 574.7 L1718.8 586.9 L1694.3 586.9"/>
<path d="M1631 407.3 L1682 402.2 L1731 396.1 L1735.1 394.1"/>
<path d="M1731 396.1 L1739.2 407.3"/>
<path d="M1771.8 394.1 L1778 407.3"/>
<path d="M1580 522.7 L1592.2 549.2 L1610.6 573.7 L1618.8 600"/>
<path d="M1580 679.8 L1608.6 698.2 L1657.6 723.7 L1667.8 725.7 L1706.5 733.9 L1710.6 743.1 L1734.1 748.2 L1759.6 734.9 L1784.1 720.6 L1783.1 711.4 L1836.1 679.8"/>
<path d="M1649.4 598.2 L1678 651.2 L1657.6 684.9 L1672.9 695.1 L1657.6 723.7"/>
<path d="M1614.7 590 L1620.8 606.3 L1623.9 651.2 L1606.5 683.9 L1608.6 698.2 L1590.2 730.8 L1584.1 800"/>
<path d="M1580 679.8 L1610.6 622.7 L1649.4 598.2 L1661.6 590"/>
<path d="M1678 651.2 L1689.2 669.6 L1749.4 633.9 L1780 617.6 L1788.2 622.7 L1796.3 649.2 L1806.5 655.3 L1845.3 633.9"/>
<path d="M1702.4 590 L1731 606.3 L1747.3 633.9"/>
<path d="M1845.3 590 L1851.4 610.4 L1845.3 633.9 L1839.2 657.3 L1835.1 679.8 L1826.9 732.9 L1828 745.1 L1843.3 783.9 L1851.4 800"/>
<path d="M1846.3 653.3 L1855.5 667.6 L1865.7 678.8 L1869.8 678.8"/>
<path d="M1826.9 732.9 L1869.8 710.4"/>
<path d="M1833.1 761.4 L1865.7 743.1 L1869.8 748.2"/>
<path d="M1798.4 781.8 L1833.1 761.4"/>
<path d="M1798.4 781.8 L1799.4 791 L1784.1 800"/>
<path d="M1667.8 725.7 L1680 762.4 L1678 800"/>
<path d="M1639.2 749.2 L1635.1 759.4 L1639.2 767.6 L1633.1 800"/>
<path d="M1580 720.6 L1592.2 715.5 L1618.8 728.8 L1633.1 747.1 L1639.2 749.2"/>
<path d="M1457.6 471.6 L1443.3 481.8 L1426.9 506.3 L1402.4 517.6 L1382 532.9 L1360.6 551.2 L1341.2 567.6 L1320.8 585.9 L1302.4 600"/>
<path d="M1510.6 439 L1484.1 449.2 L1463.7 459.4 L1457.6 471.6"/>
<path d="M1510.6 439 L1545.3 420.6 L1580 410.4"/>
<path d="M1443.3 481.8 L1443.3 532.9 L1441.2 545.1 L1437.1 573.7 L1459.6 583.9"/>
<path d="M1565.7 496.1 L1524.9 514.5 L1484.1 539 L1443.3 543.1 L1414.7 559.4 L1390.2 567.6 L1375.9 575.7"/>
<path d="M1355.5 483.9 L1351.4 504.3 L1345.3 545.1"/>
<path d="M1323.9 479.8 L1323.9 500.2"/>
<path d="M1512.7 439 L1520.8 451.2 L1545.3 459.4 L1563.7 490 L1580 496.1"/>
<path d="M1563.7 490 L1565.7 496.1"/>
<path d="M1339.2 469.6 L1355.5 483.9 L1371.8 496.1 L1390.2 504.3 L1404.5 516.5"/>
<path d="M1371.8 496.1 L1392.2 471.6 L1422.9 447.1 L1435.1 445.1"/>
<path d="M1398.4 469.6 L1426.9 506.3"/>
<path d="M1329 539 L1347.3 545.1 L1369.8 551.2 L1390.2 567.6"/>
<path d="M1323.9 530.8 L1320.8 520.6 L1347.3 524.7 L1375.9 528.8"/>
<path d="M1341.2 590 L1340.2 800"/>
<path d="M1365.7 590 L1369.8 604.3 L1357.6 624.7 L1341.2 623.7"/>
<path d="M1357.6 624.7 L1373.9 622.7 L1402.4 622.7 L1418.8 614.5 L1433.1 602.2 L1433.1 590"/>
<path d="M1433.1 602.2 L1426.9 636.9 L1420.8 659.4 L1414.7 681.8 L1398.4 696.1 L1392.2 712.4 L1386.1 745.1 L1369.8 765.5 L1363.7 800"/>
<path d="M1280 723.7 L1339.2 724.7 L1347.3 730.8 L1386.1 734.9 L1410.6 726.7 L1469.8 725.7 L1498.4 730.8 L1526.9 724.7 L1580 722.7"/>
<path d="M1513.7 728.8 L1506.5 759.4 L1496.3 763.5 L1488.2 800"/>
<path d="M1541.2 736.9 L1531 800"/>
<path d="M1580 688 L1555.5 724.7"/>
<path d="M1300.4 608.4 L1301.4 722.7"/>
<path d="M1300.4 608.4 L1320.8 604.3 L1341.2 594.1"/>
<path d="M1312.7 618.6 L1324.9 620.6 L1326.9 641 L1341.2 641"/>
<path d="M1280 839 L1312.7 849.2 L1339.2 857.3 L1398.4 874.7 L1420.8 877.8 L1459.6 888 L1469.8 893.1 L1492.2 908.4 L1499.4 914.5 L1508.6 915.5 L1541.2 936.9 L1580 959.4"/>
<path d="M1339.2 790 L1340.2 857.3 L1336.1 867.6 L1336.1 888 L1339.2 896.1 L1349.4 899.2 L1359.6 908.4 L1359.6 957.3 L1347.3 971.6 L1337.1 975.7 L1322.9 993.1"/>
<path d="M1304.5 900.2 L1339.2 898.2"/>
<path d="M1286.1 904.3 L1357.6 955.3"/>
<path d="M1280 914.5 L1286.1 904.3"/>
<path d="M1359.6 916.5 L1406.5 916.5"/>
<path d="M1398.4 874.7 L1394.3 890 L1406.5 914.5 L1407.6 941 L1412.7 949.2 L1410.6 971.6 L1394.3 977.8 L1384.1 993.1"/>
<path d="M1435.1 822.7 L1431 845.1 L1424.9 849.2 L1419.8 867.6 L1420.8 877.8"/>
<path d="M1490.2 790 L1484.1 820.6 L1469.8 893.1"/>
<path d="M1526.9 790 L1518.8 820.6"/>
<path d="M1499.4 914.5 L1500.4 930.8 L1471.8 942 L1467.8 957.3 L1467.8 973.7"/>
<path d="M1580 930.8 L1569.8 953.3"/>
<path d="M1615.7 806.3 L1600.4 859.4 L1588.2 910.4 L1580 918.6"/>
<path d="M1588.2 910.4 L1659.6 926.7 L1667.8 904.3 L1735.1 922.7 L1720.8 993.1"/>
<path d="M1684.1 830.8 L1667.8 904.3"/>
<path d="M1724.9 870.6 L1712.7 914.5"/>
<path d="M1735.1 922.7 L1737.1 932.9 L1782 907.3 L1786.1 898.2 L1824.9 875.7 L1853.5 854.3 L1870.8 859.4"/>
<path d="M1718.8 826.7 L1731 830.8 L1737.1 841 L1784.1 867.6"/>
<path d="M1731 830.8 L1799.4 792"/>
<path d="M1845.3 790 L1853.5 802.2 L1853.5 854.3"/>
<path d="M1580 798.2 L1606.5 804.3 L1615.7 806.3 L1643.3 812.4 L1647.3 818.6"/>
<path d="M1631 790 L1630 808.4"/>
<path d="M1675.9 790 L1670.8 814.5 L1684.1 830.8 L1718.8 826.7"/>
<path d="M1580 959.4 L1667.8 983.9 L1720.8 993.1"/>
<path d="M798 395.1 L795.9 416.5 L785.7 432.9 L789.8 451.2 L800 455.3 L818.4 448.2 L842.9 449.2 L893.9 449.2 L898 461.4 L906.1 461.4"/>
<path d="M842.9 449.2 L863.3 477.8 L883.7 514.5 L891.8 528.8 L922.4 561.4 L942.9 573.7"/>
<path d="M840.8 408.4 L883.7 407.3 L904.1 400.2 L924.5 396.1"/>
<path d="M840.8 408.4 L840.8 449.2"/>
<path d="M830.6 433.9 L840.8 432.9"/>
<path d="M830.6 433.9 L830.6 447.1"/>
<path d="M869.4 449.2 L869.4 463.5 L857.1 473.7 L836.7 464.5 L835.7 504.3"/>
<path d="M857.1 473.7 L814.3 532.9"/>
<path d="M904.1 457.3 L879.6 485.9 L832.7 543.1 L822.4 551.2"/>
<path d="M735.7 478.8 L814.3 478.8"/>
<path d="M735.7 478.8 L736.7 506.3 L834.7 505.3 L877.6 512.4 L885.7 485.9 L879.6 479.8"/>
<path d="M700 467.6 L724.5 475.7 L735.7 478.8"/>
<path d="M749 477.8 L744.9 496.1 L748 520.6 L740.8 524.7 L710.2 528.8 L708.2 549.2 L712.2 569.6 L740.8 594.1"/>
<path d="M748 520.6 L761.2 522.7 L769.4 530.8 L779.6 549.2 L779.6 565.5 L802 600"/>
<path d="M761.2 522.7 L785.7 532.9 L802 520.6"/>
<path d="M700 522.7 L710.2 528.8"/>
<path d="M700 569.6 L724.5 573.7 L740.8 588"/>
<path d="M910 451.2 L920.4 488 L924.5 504.3 L904.1 536.9 L873.5 573.7 L859.2 592"/>
<path d="M924.5 504.3 L940.8 520.6 L963.3 549.2 L971.4 553.3"/>
<path d="M891.8 504.3 L904.1 520.6 L922.4 528.8 L924.5 536.9"/>
<path d="M916.3 549.2 L955.1 506.3 L973.5 488 L1000 461.4"/>
<path d="M914.3 445.1 L955.1 400.2 L963.3 395.1"/>
<path d="M924.5 432.9 L965.3 471.6 L981.6 496.1"/>
<path d="M944.9 410.4 L1000 465.5"/>
<path d="M971.4 395.1 L1000 420.6"/>
<path d="M944.9 467.6 L973.5 439 L1000 414.5"/>
<path d="M963.3 510.4 L985.7 488 L1000 479.8"/>
<path d="M869.4 428.8 L879.6 422.7 L883.7 414.5"/>
<path d="M981.6 512.4 L981.6 522.7 L995.9 520.6"/>
<path d="M700 492 L708.2 500.2 L706.1 520.6"/>
<path d="M765.3 549.2 L769.4 573.7 L781.6 600"/>
<path d="M867.3 573.7 L883.7 594.1"/>
<path d="M700 420.6 L712.2 436.9 L708.2 457.3"/>
<path d="M720.4 441 L740.8 457.3 L765.3 459.4"/>
<path d="M1028.6 395.1 L1030.6 410.4 L1046.9 441 L1067.3 475.7 L1069.4 502.2"/>
<path d="M1000 432.9 L1024.5 443.1 L1040.8 457.3 L1067.3 475.7"/>
<path d="M1012.2 457.3 L1040.8 436.9 L1061.2 430.8"/>
<path d="M1069.4 504.3 L1069.4 536.9"/>
<path d="M1083.7 504.3 L1083.7 536.9"/>
<path d="M1098 512.4 L1100 532.9"/>
<path d="M1051 512.4 L1051 539"/>
<path d="M1016.3 516.5 L1016.3 545.1"/>
<path d="M1106.1 400.2 L1130.6 430.8 L1142.9 436.9"/>
<path d="M1118.4 395.1 L1155.1 439"/>
<path d="M1108.2 449.2 L1126.5 426.7 L1142.9 412.4"/>
<path d="M1114.3 520.6 L1142.9 492 L1169.4 465.5 L1179.6 453.3"/>
<path d="M1130.6 510.4 L1155.1 479.8 L1169.4 465.5"/>
<path d="M1169.4 465.5 L1204.1 483.9 L1179.6 492 L1163.3 510.4"/>
<path d="M1204.1 483.9 L1224.5 473.7 L1240.8 469.6"/>
<path d="M1132.7 600 L1132.7 532.9 L1134.7 522.7 L1153.1 512.4"/>
<path d="M1146.9 532.9 L1224.5 532.9 L1240.8 520.6 L1263.3 512.4"/>
<path d="M1146.9 532.9 L1146.9 573.7 L1175.5 573.7"/>
<path d="M1179.6 516.5 L1179.6 559.4"/>
<path d="M1195.9 516.5 L1195.9 549.2"/>
<path d="M1146.9 559.4 L1183.7 559.4"/>
<path d="M1212.2 559.4 L1285.7 559.4"/>
<path d="M1204.1 573.7 L1204.1 590 L1195.9 600"/>
<path d="M1222.4 553.3 L1244.9 536.9 L1263.3 512.4"/>
<path d="M1240.8 520.6 L1240.8 447.1 L1244.9 430.8 L1265.3 410.4 L1281.6 395.1"/>
<path d="M1240.8 447.1 L1265.3 426.7 L1285.7 410.4"/>
<path d="M1253.1 395.1 L1275.5 416.5 L1293.9 434.9"/>
<path d="M1236.7 416.5 L1255.1 436.9 L1271.4 451.2"/>
<path d="M1277.6 583.9 L1277.6 559.4"/>
<path d="M1285.7 504.3 L1300 510.4"/>
<path d="M1281.6 532.9 L1300 532.9"/>
<path d="M1273.5 559.4 L1300 559.4"/>
<path d="M1289.8 475.7 L1300 488"/>
<path d="M1206.1 457.3 L1216.3 441 L1226.5 432.9"/>
<path d="M1183.7 395.1 L1173.5 410.4 L1155.1 420.6"/>
<path d="M1000 488 L1020.4 504.3 L1024.5 520.6"/>
<path d="M1032.7 475.7 L1049 496.1 L1051 512.4"/>
<path d="M700 606.3 L720.4 602.2 L740.8 594.1 L767.3 598.2 L791.8 616.5 L806.1 639 L804.1 647.1"/>
<path d="M700 628.8 L724.5 616.5 L753.1 610.4 L781.6 626.7 L798 645.1 L810.2 657.3"/>
<path d="M728.6 641 L749 643.1 L781.6 630.8"/>
<path d="M700 675.7 L730.6 667.6 L767.3 659.4 L795.9 649.2 L822.4 634.9 L838.8 622.7"/>
<path d="M700 692 L755.1 677.8 L785.7 669.6"/>
<path d="M742.9 643.1 L743.9 671.6 L749 677.8"/>
<path d="M730.6 641 L732.7 667.6"/>
<path d="M802 688 L826.5 692 L910.2 696.1"/>
<path d="M814.3 651.2 L826.5 661.4 L842.9 657.3 L863.3 665.5 L869.4 679.8 L871.4 696.1 L871.4 749.2"/>
<path d="M863.3 665.5 L910.2 665.5"/>
<path d="M851 636.9 L851 657.3"/>
<path d="M865.3 634.9 L865.3 665.5"/>
<path d="M900 630.8 L900 663.5"/>
<path d="M877.6 632.9 L916.3 630.8"/>
<path d="M893.9 704.3 L895.9 732.9 L894.9 753.3"/>
<path d="M910.2 696.1 L910.2 720.6"/>
<path d="M842.9 759.4 L871.4 743.1 L893.9 728.8 L910.2 722.7"/>
<path d="M712.2 734.9 L822.4 734.9"/>
<path d="M822.4 702.2 L822.4 759.4"/>
<path d="M810.2 712.4 L814.3 722.7 L810.2 736.9"/>
<path d="M700 712.4 L714.3 720.6 L716.3 734.9 L718.4 757.3"/>
<path d="M738.8 720.6 L746.9 732.9 L746.9 781.8"/>
<path d="M761.2 736.9 L759.2 753.3 L759.2 777.8"/>
<path d="M736.7 704.3 L751 700.2 L767.3 706.3"/>
<path d="M738.8 720.6 L742.9 712.4 L736.7 704.3 L734.7 688"/>
<path d="M916.3 749.2 L920.4 773.7 L916.3 794.1"/>
<path d="M818.4 773.7 L830.6 800"/>
<path d="M791.8 736.9 L791.8 769.6"/>
<path d="M781.6 590 L777.6 596.1 L767.3 598.2"/>
<path d="M814.3 590 L816.3 606.3 L826.5 616.5"/>
<path d="M879.6 600.2 L867.3 608.4 L863.3 612.4"/>
<path d="M1000 872.7 L1095.9 872.7 L1104.1 871.6"/>
<path d="M1034.7 857.3 L1034.7 993.1"/>
<path d="M1059.2 857.3 L1060.2 993.1"/>
<path d="M1000 932.9 L1059.2 932.9"/>
<path d="M1060.2 923.7 L1102 923.7"/>
<path d="M1081.6 861.4 L1102 910.4 L1110.2 945.1"/>
<path d="M1104.1 871.6 L1104.1 912.4 L1106.1 945.1"/>
<path d="M1124.5 857.3 L1142.9 888 L1155.1 912.4 L1161.2 920.6"/>
<path d="M1130.6 884.9 L1159.2 884.9"/>
<path d="M1167.3 830.8 L1168.4 883.9"/>
<path d="M1169.4 830.8 L1191.8 867.6"/>
<path d="M1195.9 798.2 L1202 804.3 L1202 816.5 L1193.9 830.8 L1191.8 847.1 L1175.5 859.4 L1168.4 867.6"/>
<path d="M1177.6 824.7 L1204.1 828.8 L1253.1 830.8 L1273.5 836.9"/>
<path d="M1236.7 802.2 L1253.1 830.8 L1255.1 865.5 L1210.2 879.8"/>
<path d="M1255.1 865.5 L1269.4 888 L1300 904.3"/>
<path d="M1254.1 802.2 L1300 804.3"/>
<path d="M1179.6 930.8 L1204.1 943.1 L1244.9 959.4 L1265.3 973.7"/>
<path d="M1200 953.3 L1201 993.1"/>
<path d="M1261.2 992 L1285.7 906.3 L1300 906.3"/>
<path d="M1285.7 906.3 L1263.3 922.7"/>
<path d="M1265.3 973.7 L1300 992"/>
<path d="M779.4 864.2 L779.4 947.7"/>
<path d="M779.4 864.2 L798.9 863.2"/>
<path d="M775.5 825.3 L787.2 835 L785.3 856.4 L791.1 862.2"/>
<path d="M798.9 840.8 L814.4 850.5 L884.4 856.4"/>
<path d="M810.5 868 L865 875.8 L886.3 858.3"/>
<path d="M841.6 829.2 L839.7 862.2 L839.7 889.4"/>
<path d="M831.9 809.7 L843.6 829.2 L884.4 848.6 L919.4 862.2 L962.2 868 L1050 871.9"/>
<path d="M886.3 858.3 L820.2 914.7 L758 971.1 L754.2 978.8 L728.9 992.5"/>
<path d="M942.7 881.6 L884.4 936.1 L872.7 947.7"/>
<path d="M993.3 842.8 L950.5 864.2 L919.4 891.4 L942.7 881.6"/>
<path d="M962.2 838.9 L948.6 850.5 L944.7 864.2"/>
<path d="M999.1 844.7 L1001 992.5"/>
<path d="M1034.1 858.3 L1036 992.5"/>
<path d="M966 875.8 L966 967.2"/>
<path d="M1001 932.2 L1050 932.2"/>
<path d="M884.4 971.1 L872.7 992.5"/>
<path d="M1252 671.6 L1252 800"/>
<path d="M1233.7 696.1 L1252 695.1"/>
<path d="M1231.6 719.6 L1280.6 722.7 L1339.8 724.7 L1350 730.8"/>
<path d="M1301 608.4 L1301 671.6"/>
<path d="M1260.2 639 L1301 639 L1341.8 634.9"/>
<path d="M1301 608.4 L1341.8 594.1 L1350 590"/>
<path d="M1258.2 639 L1272.4 624.7 L1301 608.4"/>
<path d="M1239.8 649.2 L1252 661.4"/>
<path d="M1309.2 610.4 L1313.3 618.6 L1325.5 620.6 L1325.5 639"/>
<path d="M1199 590 L1203.1 600.2"/>
<path d="M1240.8 414.5 L1240.8 524.7"/>
<path d="M1200 557.3 L1334.7 557.3"/>
<path d="M1277.6 559.4 L1277.6 583.9 L1200 583.9"/>
<path d="M1277.6 492 L1314.3 496.1 L1322.4 504.3 L1351 501.2 L1373.5 501.2"/>
<path d="M1298 436.9 L1298 471.6 L1306.1 475.7"/>
<path d="M1306.1 451.2 L1330.6 451.2 L1355.1 481.8"/>
<path d="M1289.8 520.6 L1298 524.7 L1322.4 524.7 L1346.9 522.7"/>
<path d="M1295.9 532.9 L1298 549.2 L1310.2 559.4 L1330.6 567.6 L1346.9 569.6"/>
<path d="M1300 549.2 L1322.4 541 L1342.9 545.1"/>
<path d="M1320.4 528.8 L1330.6 545.1 L1363.3 555.3"/>
<path d="M1330.6 449.2 L1338.8 467.6 L1355.1 481.8"/>
<path d="M1369.4 428.8 L1377.6 443.1 L1395.9 469.6"/>
<path d="M1424.5 445.1 L1444.9 443.1 L1471.4 457.3"/>
<path d="M1404.1 412.4 L1416.3 422.7 L1442.9 422.7 L1463.3 447.1"/>
<path d="M1465.3 395.1 L1471.4 406.3 L1485.7 410.4 L1500 420.6"/>
<path d="M1420.4 395.1 L1424.5 410.4 L1440.8 412.4"/>
<path d="M1200 402.2 L1216.3 412.4 L1240.8 439"/>
<path d="M1212.2 451.2 L1240.8 422.7 L1267.3 400.2"/>
<path d="M1249 395.1 L1275.5 420.6 L1277.6 430.8"/>
<path d="M1224.5 395.1 L1253.1 422.7"/>
<path d="M1251 426.7 L1267.3 443.1 L1293.9 439"/>
<path d="M1242.9 453.3 L1267.3 459.4"/>
<path d="M1200 524.7 L1240.8 524.7 L1249 520.6 L1267.3 504.3"/>
</g>
<path d="M212.7 477.7 L218.3 490.1 L235.4 485.1 L250 493.8 L266.2 488.9 L289.5 499.8 L281.7 507.5 L275.5 516.9 L278.6 524.6" fill="none" stroke="#9cc0f9" stroke-width="1.8" stroke-linejoin="round"/>
<path d="M130 939 L143 962 L172 994" fill="none" stroke="#c9ced2" stroke-width="1.2"/><!--county-->
<path d="M1124.5 855.3 L1128.6 871.6 L1130.6 888 L1140.8 896.1" fill="none" stroke="#9cc0f9" stroke-width="1.2"/>
<g fill="none" stroke-linecap="round" stroke-linejoin="round">
<g stroke="#f9ab18">
<path d="M497.9 394 C496.6 396.9 492.7 405.4 490.1 411.1 C487.5 416.8 487.1 423.0 482.4 428.2 C477.7 433.4 466.4 438.3 462.1 442.2 C457.9 446.1 457.8 446.3 456.9 451.5 C456.0 456.7 455.8 467.1 456.9 473.3 C458.0 479.5 462.0 482.7 463.7 488.9 C465.4 495.1 466.4 499.7 466.8 510.6 C467.2 521.5 464.9 541.8 465.9 554.2 C466.9 566.7 473.1 576.5 473 585.3 C472.9 594.1 467.4 600.9 465.3 607.1 C463.2 613.3 461.1 617.4 460.6 622.6 C460.1 627.8 459.8 632.5 462.1 638.2 C464.4 643.9 469.9 650.6 474.6 656.8 C479.3 663.0 485.7 669.8 490.1 675.5 C494.5 681.2 498.7 688.2 501 691 C503.3 693.8 502.3 689.6 504.1 692.4 C505.9 695.2 510.5 702.3 511.9 708 C513.3 713.7 511.7 719.5 512.5 726.7 C513.3 734.0 514.6 743.7 516.6 751.5 C518.6 759.3 520.5 766.5 524.4 773.3 C528.3 780.0 536.4 786.3 539.9 792 C543.4 797.7 544.5 799.7 545.5 807.5 C546.5 815.3 546.0 833.4 546.1 838.6" stroke-width="5.3"/>
<path d="M769.4 395.1 C766.7 398.0 758.2 406.9 753.1 412.4 C748.0 417.8 743.9 422.0 738.8 427.8 C733.7 433.6 727.2 440.8 722.4 447.1 C717.6 453.4 714.2 459.3 710.2 465.5 C706.2 471.7 704.1 474.1 698.5 484.2 C692.9 494.3 683.0 512.5 676.8 526.2 C670.6 539.9 665.2 556.5 661.2 566.6 C657.2 576.7 654.0 566.1 652.5 586.8 C651.0 607.5 652.5 669.2 652.5 691 C652.5 712.8 652.1 707.2 652.5 717.3 C652.9 727.4 652.5 740.6 655 751.5 C657.5 762.4 664.5 773.8 667.4 782.6 C670.2 791.4 670.5 797.1 672.1 804.4 C673.7 811.7 674.5 817.9 676.8 826.2 C679.1 834.5 683.5 844.9 686.1 854.2 C688.7 863.5 690.8 871.8 692.3 882.2 C693.8 892.6 693.3 905.5 695.4 916.4 C697.5 927.3 704.7 946.2 704.8 947.5 C704.9 948.8 695.0 923.1 695.8 924.4 C696.6 925.7 704.2 944.3 709.4 955.5 C714.6 966.7 723.6 985.0 726.9 991.5 C730.1 998.0 728.6 993.9 728.9 994.4" stroke-width="6.1"/>
<path d="M720.4 412.4 C723.5 415.0 732.7 421.7 738.8 427.8 C744.9 433.9 751.7 443.6 757.1 449.2 C762.5 454.8 767.3 457.0 771.4 461.4 C775.5 465.8 777.5 469.2 781.6 475.7 C785.7 482.2 791.1 492.0 795.9 500.2 C800.7 508.4 805.8 516.9 810.2 524.7 C814.6 532.5 818.3 541.3 822.4 547.1 C826.5 552.9 829.9 555.0 834.7 559.4 C839.5 563.8 846.2 569.1 851 573.7 C855.8 578.3 861.2 584.7 863.3 586.9" stroke-width="5.3"/>
<path d="M670.5 599.3 C671.8 601.1 674.7 603.7 678.3 610.2 C681.9 616.7 688.1 629.9 692.3 638.2 C696.4 646.5 700.6 655.4 703.2 659.9 C705.9 664.4 703.3 663.5 708.2 665.5 C713.1 667.5 726.2 669.2 732.7 671.6 C739.2 674.0 742.5 676.7 746.9 679.8 C751.3 682.9 755.6 688.0 759.2 690 C762.8 692.0 764.7 690.3 768.4 692 C772.1 693.7 777.4 698.5 781.6 700.2 C785.9 701.9 790.5 702.0 793.9 702.2 C797.3 702.4 798.6 702.2 802 701.2 C805.4 700.2 807.8 696.4 814.3 696.1 C820.8 695.8 832.6 696.8 840.8 699.2 C849.0 701.6 856.5 706.8 863.3 710.4 C870.1 714.0 877.0 716.2 881.6 720.6 C886.2 725.0 888.9 731.0 890.8 736.9 C892.7 742.8 892.5 753.1 892.9 756.3" stroke-width="5.5"/>
<path d="M129.3 888.4 C131.9 888.9 125.7 890.9 144.9 891.5 C164.1 892.1 220.0 892.2 244.4 892.1 C268.8 892.0 278.7 892.5 291.1 890.9 C303.6 889.2 311.3 884.7 319.1 882.2 C326.9 879.7 330.4 877.1 337.7 876 C344.9 874.9 350.9 875.4 362.6 875.3 C374.3 875.2 393.7 877.8 407.7 875.3 C421.7 872.8 432.3 865.5 446.6 860.4 C460.9 855.3 479.1 849.7 493.3 844.9 C507.6 840.1 513.5 834.3 532.1 831.8 C550.8 829.3 585.8 831.6 605.2 829.9 C624.7 828.2 637.4 824.2 648.8 821.5 C660.2 818.8 669.8 814.8 673.7 813.7 C677.6 812.6 664.6 817.3 672.1 815.1 C679.6 812.9 707.2 804.1 718.7 800.6 C730.2 797.1 731.7 797.2 740.8 794.1 C749.9 791.0 759.9 786.2 773.5 781.8 C787.1 777.4 807.4 771.3 822.4 767.6 C837.4 763.9 851.5 761.1 863.3 759.4 C875.0 757.7 885.8 757.3 892.9 757.3 C900.0 757.3 903.9 759.0 906.1 759.4" stroke-width="5.9"/>
<path d="M777.6 800 C776.9 797.0 774.4 793.0 773.5 781.8 C772.6 770.6 772.2 745.5 772.4 732.9 C772.6 720.3 772.3 713.4 774.5 706.3 C776.7 699.1 781.8 695.8 785.7 690 C789.6 684.2 793.9 677.1 798 671.6 C802.1 666.1 805.5 663.4 810.2 657.3 C815.0 651.2 821.0 642.4 826.5 634.9 C832.0 627.4 837.8 618.9 842.9 612.4 C848.0 605.9 853.0 600.4 857.1 596.1 C861.2 591.9 858.1 591.0 867.3 586.9 C876.5 582.8 899.3 574.1 912.2 571.6 C925.1 569.1 936.4 573.0 944.9 571.6 C953.4 570.2 958.9 567.9 963.3 563.5 C967.7 559.1 967.7 550.9 971.4 545.1 C975.1 539.3 980.9 532.5 985.7 528.8 C990.5 525.1 995.6 525.8 1000 522.7 C1004.4 519.6 1007.4 513.6 1012.2 510.4 C1017.0 507.2 1020.4 504.7 1028.6 503.3 C1036.8 501.9 1051.0 502.4 1061.2 502.2 C1071.4 502.0 1080.3 501.5 1089.8 502.2 C1099.3 502.9 1109.6 504.8 1118.4 506.3 C1127.2 507.8 1132.0 510.2 1142.9 511.4 C1153.8 512.6 1170.1 513.3 1183.7 513.5 C1197.3 513.7 1212.6 512.6 1224.5 512.4 C1236.4 512.2 1248.3 513.4 1255.1 512.4 C1261.9 511.4 1263.3 505.6 1265.3 506.3 C1267.3 507.0 1267.6 510.7 1267.3 516.5 C1267.0 522.3 1264.6 531.5 1263.3 541 C1262.0 550.5 1260.7 562.1 1259.2 573.7 C1257.7 585.3 1255.1 598.2 1254.1 610.4 C1253.1 622.6 1253.8 639.3 1253.1 647.1 C1252.4 654.9 1249.8 654.2 1250 657.3 C1250.2 660.4 1251.7 662.8 1254.1 665.5 C1256.5 668.2 1260.6 670.6 1264.3 673.7 C1268.0 676.8 1273.4 680.9 1276.5 683.9 C1279.6 686.9 1281.5 688.6 1282.7 692 C1283.9 695.4 1283.5 687.3 1283.7 704.3 C1283.9 721.3 1284.1 776.4 1283.7 794.1 C1283.3 811.8 1283.3 803.3 1281.6 810.4 C1279.9 817.5 1276.5 826.0 1273.5 836.9 C1270.5 847.8 1266.4 864.1 1263.3 875.7 C1260.2 887.3 1258.2 898.5 1255.1 906.3 C1252.0 914.1 1250.0 917.6 1244.9 922.7 C1239.8 927.8 1231.3 932.8 1224.5 936.9 C1217.7 941.0 1211.9 944.9 1204.1 947.1 C1196.3 949.3 1198.0 949.9 1177.6 950.2 C1157.2 950.6 1100.0 948.9 1081.6 949.2 C1063.2 949.5 1074.1 951.5 1067.3 952.2 C1060.5 952.9 1052.0 953.1 1040.8 953.3 C1029.6 953.5 1013.1 953.1 1000 953.3 C986.9 953.5 973.7 954.1 962.2 954.5 C950.7 954.9 942.8 953.7 931.1 955.5 C919.4 957.3 902.6 963.6 892.2 965.2 C881.8 966.8 875.3 965.8 868.8 965.2 C862.3 964.6 857.5 963.3 853.3 961.4 C849.1 959.5 846.8 957.2 843.6 953.6 C840.4 950.0 837.5 947.8 833.9 940 C830.3 932.2 826.8 919.5 822.2 906.9 C817.7 894.3 811.1 876.2 806.6 864.2 C802.1 852.2 798.9 844.1 795 835 C791.1 825.9 786.2 815.5 783.3 809.7 C780.4 803.9 778.5 801.6 777.6 800" stroke-width="6.9"/>
<path d="M1253.1 610.4 C1251.9 613.8 1248.5 624.3 1245.9 630.8 C1243.4 637.3 1240.8 644.8 1237.8 649.2 C1234.8 653.6 1230.7 655.3 1227.6 657.3 C1224.5 659.3 1220.8 660.7 1219.4 661.4" stroke-width="5.9"/>
<path d="M883.7 395.1 C884.4 397.3 885.8 402.8 887.8 408.4 C889.8 414.0 893.2 423.0 895.9 428.8 C898.6 434.6 900.0 439.0 904.1 443.1 C908.2 447.2 915.3 449.2 920.4 453.3 C925.5 457.4 930.3 463.2 934.7 467.6 C939.1 472.0 942.8 473.7 946.9 479.8 C951.0 485.9 956.1 496.1 959.2 504.3 C962.3 512.5 963.3 522.0 965.3 528.8 C967.3 535.6 969.9 540.0 971.4 545.1 C972.9 550.2 973.8 555.3 974.5 559.4 C975.2 563.5 975.3 567.9 975.5 569.6" stroke-width="6.9"/>
<path d="M1104.1 395.1 C1103.1 398.0 1099.7 407.1 1098 412.4 C1096.3 417.7 1096.0 421.6 1093.9 426.7 C1091.9 431.8 1087.6 437.7 1085.7 443.1 C1083.8 448.6 1082.0 454.6 1082.7 459.4 C1083.4 464.1 1087.2 467.9 1089.8 471.6 C1092.3 475.3 1096.0 478.4 1098 481.8 C1100.0 485.2 1099.8 486.9 1102 492 C1104.2 497.1 1109.2 507.3 1111.2 512.4 C1113.2 517.5 1114.8 518.3 1114.3 522.7 C1113.8 527.1 1109.6 535.3 1108.2 539 C1106.8 542.7 1106.4 544.1 1106.1 545.1" stroke-width="6.3"/>
<path d="M1000 414.5 C1004.1 414.1 1016.3 413.1 1024.5 412.4 C1032.7 411.7 1041.5 409.5 1049 410.4 C1056.5 411.3 1062.6 415.2 1069.4 417.6 C1076.2 420.0 1084.4 423.0 1089.8 424.7 C1095.2 426.4 1096.6 424.6 1102 427.8 C1107.4 431.0 1115.6 440.2 1122.4 444.1 C1129.2 448.0 1136.1 450.4 1142.9 451.2 C1149.7 452.0 1155.5 450.4 1163.3 449.2 C1171.1 448.0 1183.3 444.8 1189.8 444.1 C1196.2 443.4 1197.6 443.6 1202 445.1 C1206.4 446.6 1211.2 449.9 1216.3 453.3 C1221.4 456.7 1227.9 462.9 1232.7 465.5 C1237.5 468.1 1238.5 468.1 1244.9 468.6 C1251.4 469.1 1265.6 469.8 1271.4 468.6 C1277.2 467.4 1277.2 463.9 1279.6 461.4 C1282.0 458.8 1284.7 454.6 1285.7 453.3" stroke-width="5.3"/>
<path d="M1265.3 506.3 C1266.7 503.2 1270.1 493.1 1273.5 488 C1276.9 482.9 1281.3 480.1 1285.7 475.7 C1290.1 471.3 1292.5 467.5 1300 461.4 C1307.5 455.3 1322.8 444.1 1331 439 C1339.2 433.9 1343.6 433.5 1349.4 430.8 C1355.2 428.1 1360.3 426.4 1365.7 422.7 C1371.1 419.0 1377.2 413.0 1382 408.4 C1386.8 403.8 1392.2 397.3 1394.3 395.1" stroke-width="6.9"/>
<path d="M1280 459.4 C1280.8 458.5 1283.9 455.7 1285.1 454.3 C1286.3 452.9 1286.8 451.7 1287.1 451.2" stroke-width="4.9"/>
<path d="M1402.4 410.4 C1405.1 414.8 1413.3 430.8 1418.8 436.9 C1424.2 443.0 1430.0 443.4 1435.1 447.1 C1440.2 450.9 1445.3 455.0 1449.4 459.4 C1453.5 463.8 1455.9 467.9 1459.6 473.7 C1463.3 479.5 1467.7 486.3 1471.8 494.1 C1475.9 501.9 1481.9 514.1 1484.1 520.6 C1486.3 527.1 1485.4 527.5 1485.1 532.9 C1484.8 538.3 1483.5 546.5 1482 553.3 C1480.5 560.1 1478.3 567.2 1475.9 573.7 C1473.5 580.2 1469.2 588.6 1467.8 592 C1466.4 595.4 1466.9 590.4 1467.8 594.1 C1468.7 597.9 1471.2 608.0 1472.9 614.5 C1474.6 621.0 1475.8 625.4 1478 632.9 C1480.2 640.4 1483.0 651.6 1486.1 659.4 C1489.1 667.2 1490.5 672.0 1496.3 679.8 C1502.1 687.6 1513.0 697.8 1520.8 706.3 C1528.6 714.8 1538.2 724.3 1543.3 730.8 C1548.4 737.3 1547.7 738.6 1551.4 745.1 C1555.1 751.6 1561.6 762.8 1565.7 769.6 C1569.8 776.4 1574.2 779.1 1575.9 785.9 C1577.6 792.7 1576.1 799.5 1575.9 810.4 C1575.7 821.3 1576.6 842.0 1574.9 851.2 C1573.2 860.4 1567.9 860.7 1565.7 865.5 C1563.5 870.3 1562.9 874.7 1561.6 879.8 C1560.2 884.9 1559.3 890.0 1557.6 896.1 C1555.9 902.2 1554.5 909.7 1551.4 916.5 C1548.3 923.3 1542.1 930.8 1539.2 936.9 C1536.3 943.0 1534.4 947.2 1534.1 953.3 C1533.8 959.4 1536.1 967.1 1537.1 973.7 C1538.1 980.3 1539.7 989.9 1540.2 993.1" stroke-width="6.1"/>
<path d="M1231.6 712.4 C1235.7 710.7 1247.6 705.2 1256.1 702.2 C1264.6 699.2 1277.7 695.5 1282.7 694.1 C1287.7 692.8 1276.3 698.0 1286.1 694.1 C1295.8 690.2 1318.4 679.1 1341.2 670.6 C1364.0 662.1 1400.8 650.6 1422.9 643.1 C1445.0 635.6 1447.7 634.6 1473.9 625.7 C1500.1 616.9 1555.8 599.1 1580 590 C1604.2 580.9 1596.4 581.9 1619 571.3 C1641.6 560.7 1689.0 538.4 1715.5 526.2 C1742.0 514.0 1759.6 506.0 1777.7 498.2 C1795.8 490.4 1807.2 484.4 1824.3 479.5 C1841.3 474.6 1870.7 470.4 1880 468.6" stroke-width="6.9"/>
<path d="M1211.2 778.8 C1213.2 778.4 1216.7 776.9 1223.5 776.7 C1230.3 776.5 1242.0 777.4 1252 777.8 C1262.0 778.1 1273.5 778.5 1283.7 778.8 C1293.9 779.1 1306.3 778.6 1313.3 779.8 C1320.3 781.0 1315.1 781.8 1325.5 785.9 C1335.9 790.0 1357.6 798.2 1375.9 804.3 C1394.2 810.4 1421.8 818.6 1435.1 822.7 C1448.4 826.8 1444.3 826.6 1455.5 828.8 C1466.7 831.0 1492.2 834.4 1502.4 835.9 C1512.6 837.4 1509.9 836.1 1516.7 838 C1523.5 839.9 1535.8 845.1 1543.3 847.1 C1550.8 849.1 1555.5 849.4 1561.6 850.2 C1567.7 851.1 1573.5 851.0 1580 852.2 C1586.5 853.4 1588.8 854.4 1600.4 857.3 C1612.0 860.2 1629.0 867.7 1649.4 869.6 C1669.8 871.5 1701.1 868.4 1722.9 868.6 C1744.7 868.8 1769.1 870.1 1780 870.6 C1790.9 871.1 1781.0 870.2 1788.2 871.6 C1795.4 873.0 1815.4 876.8 1822.9 878.8 C1830.4 880.8 1829.4 879.0 1833.1 883.9 C1836.8 888.8 1840.2 898.9 1845.3 908.4 C1850.4 917.9 1859.6 933.5 1863.7 941 C1867.8 948.5 1868.8 951.2 1869.8 953.3" stroke-width="5.9"/>
<path d="M1030.6 851.2 C1029.9 852.2 1028.9 853.2 1026.5 857.3 C1024.1 861.4 1019.3 871.6 1016.3 875.7 C1013.2 879.8 1008.2 882.1 1008.2 881.8 C1008.2 881.5 1017.2 873.9 1016.6 873.9 C1016.0 873.9 1011.4 878.7 1004.9 881.6 C998.4 884.5 984.8 888.1 977.7 891.4 C970.6 894.6 971.3 896.6 962.2 901.1 C953.1 905.6 936.3 912.5 923.3 918.6 C910.3 924.8 894.1 932.8 884.4 938 C874.7 943.2 870.2 945.8 865 949.7 C859.8 953.6 857.8 956.5 853.3 961.4 C848.8 966.2 842.2 973.6 837.7 978.8 C833.2 984.0 828.4 989.7 826.1 992.5 C823.8 995.3 824.4 994.9 824.1 995.4" stroke-width="6.9"/>
<path d="M1151 832.9 C1152.0 833.9 1153.3 835.6 1157.1 839 C1160.8 842.4 1168.4 849.2 1173.5 853.3 C1178.6 857.4 1183.0 860.8 1187.8 863.5 C1192.5 866.2 1198.3 865.9 1202 869.6 C1205.7 873.3 1207.1 879.8 1210.2 885.9 C1213.3 892.0 1217.0 898.8 1220.4 906.3 C1223.8 913.8 1226.5 923.0 1230.6 930.8 C1234.7 938.6 1240.5 946.1 1244.9 953.3 C1249.3 960.4 1253.4 968.3 1257.1 973.7 C1260.8 979.1 1264.9 982.7 1267.3 985.9 C1269.7 989.1 1270.7 991.9 1271.4 993.1" stroke-width="6.9"/>
<path d="M1110.2 951.2 C1110.9 953.6 1112.4 958.5 1114.3 965.5 C1116.2 972.5 1120.2 988.5 1121.4 993.1" stroke-width="5.3"/>
<path d="M962.2 955.5 L958.3 992.5" stroke-width="5.3"/>
<path d="M1273.5 981.8 C1275.5 982.1 1281.3 982.5 1285.7 983.9 C1290.1 985.3 1297.6 989.0 1300 990" stroke-width="5.3"/>
<path d="M1280 980.8 C1282.0 981.6 1288.5 983.8 1292.2 985.9 C1295.9 988.0 1300.7 991.9 1302.4 993.1" stroke-width="5.3"/>
<path d="M695.4 394 C696.2 395.0 698.8 398.1 700.1 400.2 C701.4 402.3 702.7 405.4 703.2 406.4" stroke-width="4.5"/>
</g><g stroke="#fef0c3">
<path d="M497.9 394 C496.6 396.9 492.7 405.4 490.1 411.1 C487.5 416.8 487.1 423.0 482.4 428.2 C477.7 433.4 466.4 438.3 462.1 442.2 C457.9 446.1 457.8 446.3 456.9 451.5 C456.0 456.7 455.8 467.1 456.9 473.3 C458.0 479.5 462.0 482.7 463.7 488.9 C465.4 495.1 466.4 499.7 466.8 510.6 C467.2 521.5 464.9 541.8 465.9 554.2 C466.9 566.7 473.1 576.5 473 585.3 C472.9 594.1 467.4 600.9 465.3 607.1 C463.2 613.3 461.1 617.4 460.6 622.6 C460.1 627.8 459.8 632.5 462.1 638.2 C464.4 643.9 469.9 650.6 474.6 656.8 C479.3 663.0 485.7 669.8 490.1 675.5 C494.5 681.2 498.7 688.2 501 691 C503.3 693.8 502.3 689.6 504.1 692.4 C505.9 695.2 510.5 702.3 511.9 708 C513.3 713.7 511.7 719.5 512.5 726.7 C513.3 734.0 514.6 743.7 516.6 751.5 C518.6 759.3 520.5 766.5 524.4 773.3 C528.3 780.0 536.4 786.3 539.9 792 C543.4 797.7 544.5 799.7 545.5 807.5 C546.5 815.3 546.0 833.4 546.1 838.6" stroke-width="2"/>
<path d="M769.4 395.1 C766.7 398.0 758.2 406.9 753.1 412.4 C748.0 417.8 743.9 422.0 738.8 427.8 C733.7 433.6 727.2 440.8 722.4 447.1 C717.6 453.4 714.2 459.3 710.2 465.5 C706.2 471.7 704.1 474.1 698.5 484.2 C692.9 494.3 683.0 512.5 676.8 526.2 C670.6 539.9 665.2 556.5 661.2 566.6 C657.2 576.7 654.0 566.1 652.5 586.8 C651.0 607.5 652.5 669.2 652.5 691 C652.5 712.8 652.1 707.2 652.5 717.3 C652.9 727.4 652.5 740.6 655 751.5 C657.5 762.4 664.5 773.8 667.4 782.6 C670.2 791.4 670.5 797.1 672.1 804.4 C673.7 811.7 674.5 817.9 676.8 826.2 C679.1 834.5 683.5 844.9 686.1 854.2 C688.7 863.5 690.8 871.8 692.3 882.2 C693.8 892.6 693.3 905.5 695.4 916.4 C697.5 927.3 704.7 946.2 704.8 947.5 C704.9 948.8 695.0 923.1 695.8 924.4 C696.6 925.7 704.2 944.3 709.4 955.5 C714.6 966.7 723.6 985.0 726.9 991.5 C730.1 998.0 728.6 993.9 728.9 994.4" stroke-width="2.8"/>
<path d="M720.4 412.4 C723.5 415.0 732.7 421.7 738.8 427.8 C744.9 433.9 751.7 443.6 757.1 449.2 C762.5 454.8 767.3 457.0 771.4 461.4 C775.5 465.8 777.5 469.2 781.6 475.7 C785.7 482.2 791.1 492.0 795.9 500.2 C800.7 508.4 805.8 516.9 810.2 524.7 C814.6 532.5 818.3 541.3 822.4 547.1 C826.5 552.9 829.9 555.0 834.7 559.4 C839.5 563.8 846.2 569.1 851 573.7 C855.8 578.3 861.2 584.7 863.3 586.9" stroke-width="2"/>
<path d="M670.5 599.3 C671.8 601.1 674.7 603.7 678.3 610.2 C681.9 616.7 688.1 629.9 692.3 638.2 C696.4 646.5 700.6 655.4 703.2 659.9 C705.9 664.4 703.3 663.5 708.2 665.5 C713.1 667.5 726.2 669.2 732.7 671.6 C739.2 674.0 742.5 676.7 746.9 679.8 C751.3 682.9 755.6 688.0 759.2 690 C762.8 692.0 764.7 690.3 768.4 692 C772.1 693.7 777.4 698.5 781.6 700.2 C785.9 701.9 790.5 702.0 793.9 702.2 C797.3 702.4 798.6 702.2 802 701.2 C805.4 700.2 807.8 696.4 814.3 696.1 C820.8 695.8 832.6 696.8 840.8 699.2 C849.0 701.6 856.5 706.8 863.3 710.4 C870.1 714.0 877.0 716.2 881.6 720.6 C886.2 725.0 888.9 731.0 890.8 736.9 C892.7 742.8 892.5 753.1 892.9 756.3" stroke-width="2.2"/>
<path d="M129.3 888.4 C131.9 888.9 125.7 890.9 144.9 891.5 C164.1 892.1 220.0 892.2 244.4 892.1 C268.8 892.0 278.7 892.5 291.1 890.9 C303.6 889.2 311.3 884.7 319.1 882.2 C326.9 879.7 330.4 877.1 337.7 876 C344.9 874.9 350.9 875.4 362.6 875.3 C374.3 875.2 393.7 877.8 407.7 875.3 C421.7 872.8 432.3 865.5 446.6 860.4 C460.9 855.3 479.1 849.7 493.3 844.9 C507.6 840.1 513.5 834.3 532.1 831.8 C550.8 829.3 585.8 831.6 605.2 829.9 C624.7 828.2 637.4 824.2 648.8 821.5 C660.2 818.8 669.8 814.8 673.7 813.7 C677.6 812.6 664.6 817.3 672.1 815.1 C679.6 812.9 707.2 804.1 718.7 800.6 C730.2 797.1 731.7 797.2 740.8 794.1 C749.9 791.0 759.9 786.2 773.5 781.8 C787.1 777.4 807.4 771.3 822.4 767.6 C837.4 763.9 851.5 761.1 863.3 759.4 C875.0 757.7 885.8 757.3 892.9 757.3 C900.0 757.3 903.9 759.0 906.1 759.4" stroke-width="2.6"/>
<path d="M777.6 800 C776.9 797.0 774.4 793.0 773.5 781.8 C772.6 770.6 772.2 745.5 772.4 732.9 C772.6 720.3 772.3 713.4 774.5 706.3 C776.7 699.1 781.8 695.8 785.7 690 C789.6 684.2 793.9 677.1 798 671.6 C802.1 666.1 805.5 663.4 810.2 657.3 C815.0 651.2 821.0 642.4 826.5 634.9 C832.0 627.4 837.8 618.9 842.9 612.4 C848.0 605.9 853.0 600.4 857.1 596.1 C861.2 591.9 858.1 591.0 867.3 586.9 C876.5 582.8 899.3 574.1 912.2 571.6 C925.1 569.1 936.4 573.0 944.9 571.6 C953.4 570.2 958.9 567.9 963.3 563.5 C967.7 559.1 967.7 550.9 971.4 545.1 C975.1 539.3 980.9 532.5 985.7 528.8 C990.5 525.1 995.6 525.8 1000 522.7 C1004.4 519.6 1007.4 513.6 1012.2 510.4 C1017.0 507.2 1020.4 504.7 1028.6 503.3 C1036.8 501.9 1051.0 502.4 1061.2 502.2 C1071.4 502.0 1080.3 501.5 1089.8 502.2 C1099.3 502.9 1109.6 504.8 1118.4 506.3 C1127.2 507.8 1132.0 510.2 1142.9 511.4 C1153.8 512.6 1170.1 513.3 1183.7 513.5 C1197.3 513.7 1212.6 512.6 1224.5 512.4 C1236.4 512.2 1248.3 513.4 1255.1 512.4 C1261.9 511.4 1263.3 505.6 1265.3 506.3 C1267.3 507.0 1267.6 510.7 1267.3 516.5 C1267.0 522.3 1264.6 531.5 1263.3 541 C1262.0 550.5 1260.7 562.1 1259.2 573.7 C1257.7 585.3 1255.1 598.2 1254.1 610.4 C1253.1 622.6 1253.8 639.3 1253.1 647.1 C1252.4 654.9 1249.8 654.2 1250 657.3 C1250.2 660.4 1251.7 662.8 1254.1 665.5 C1256.5 668.2 1260.6 670.6 1264.3 673.7 C1268.0 676.8 1273.4 680.9 1276.5 683.9 C1279.6 686.9 1281.5 688.6 1282.7 692 C1283.9 695.4 1283.5 687.3 1283.7 704.3 C1283.9 721.3 1284.1 776.4 1283.7 794.1 C1283.3 811.8 1283.3 803.3 1281.6 810.4 C1279.9 817.5 1276.5 826.0 1273.5 836.9 C1270.5 847.8 1266.4 864.1 1263.3 875.7 C1260.2 887.3 1258.2 898.5 1255.1 906.3 C1252.0 914.1 1250.0 917.6 1244.9 922.7 C1239.8 927.8 1231.3 932.8 1224.5 936.9 C1217.7 941.0 1211.9 944.9 1204.1 947.1 C1196.3 949.3 1198.0 949.9 1177.6 950.2 C1157.2 950.6 1100.0 948.9 1081.6 949.2 C1063.2 949.5 1074.1 951.5 1067.3 952.2 C1060.5 952.9 1052.0 953.1 1040.8 953.3 C1029.6 953.5 1013.1 953.1 1000 953.3 C986.9 953.5 973.7 954.1 962.2 954.5 C950.7 954.9 942.8 953.7 931.1 955.5 C919.4 957.3 902.6 963.6 892.2 965.2 C881.8 966.8 875.3 965.8 868.8 965.2 C862.3 964.6 857.5 963.3 853.3 961.4 C849.1 959.5 846.8 957.2 843.6 953.6 C840.4 950.0 837.5 947.8 833.9 940 C830.3 932.2 826.8 919.5 822.2 906.9 C817.7 894.3 811.1 876.2 806.6 864.2 C802.1 852.2 798.9 844.1 795 835 C791.1 825.9 786.2 815.5 783.3 809.7 C780.4 803.9 778.5 801.6 777.6 800" stroke-width="3.6"/>
<path d="M1253.1 610.4 C1251.9 613.8 1248.5 624.3 1245.9 630.8 C1243.4 637.3 1240.8 644.8 1237.8 649.2 C1234.8 653.6 1230.7 655.3 1227.6 657.3 C1224.5 659.3 1220.8 660.7 1219.4 661.4" stroke-width="2.6"/>
<path d="M883.7 395.1 C884.4 397.3 885.8 402.8 887.8 408.4 C889.8 414.0 893.2 423.0 895.9 428.8 C898.6 434.6 900.0 439.0 904.1 443.1 C908.2 447.2 915.3 449.2 920.4 453.3 C925.5 457.4 930.3 463.2 934.7 467.6 C939.1 472.0 942.8 473.7 946.9 479.8 C951.0 485.9 956.1 496.1 959.2 504.3 C962.3 512.5 963.3 522.0 965.3 528.8 C967.3 535.6 969.9 540.0 971.4 545.1 C972.9 550.2 973.8 555.3 974.5 559.4 C975.2 563.5 975.3 567.9 975.5 569.6" stroke-width="3.6"/>
<path d="M1104.1 395.1 C1103.1 398.0 1099.7 407.1 1098 412.4 C1096.3 417.7 1096.0 421.6 1093.9 426.7 C1091.9 431.8 1087.6 437.7 1085.7 443.1 C1083.8 448.6 1082.0 454.6 1082.7 459.4 C1083.4 464.1 1087.2 467.9 1089.8 471.6 C1092.3 475.3 1096.0 478.4 1098 481.8 C1100.0 485.2 1099.8 486.9 1102 492 C1104.2 497.1 1109.2 507.3 1111.2 512.4 C1113.2 517.5 1114.8 518.3 1114.3 522.7 C1113.8 527.1 1109.6 535.3 1108.2 539 C1106.8 542.7 1106.4 544.1 1106.1 545.1" stroke-width="3"/>
<path d="M1000 414.5 C1004.1 414.1 1016.3 413.1 1024.5 412.4 C1032.7 411.7 1041.5 409.5 1049 410.4 C1056.5 411.3 1062.6 415.2 1069.4 417.6 C1076.2 420.0 1084.4 423.0 1089.8 424.7 C1095.2 426.4 1096.6 424.6 1102 427.8 C1107.4 431.0 1115.6 440.2 1122.4 444.1 C1129.2 448.0 1136.1 450.4 1142.9 451.2 C1149.7 452.0 1155.5 450.4 1163.3 449.2 C1171.1 448.0 1183.3 444.8 1189.8 444.1 C1196.2 443.4 1197.6 443.6 1202 445.1 C1206.4 446.6 1211.2 449.9 1216.3 453.3 C1221.4 456.7 1227.9 462.9 1232.7 465.5 C1237.5 468.1 1238.5 468.1 1244.9 468.6 C1251.4 469.1 1265.6 469.8 1271.4 468.6 C1277.2 467.4 1277.2 463.9 1279.6 461.4 C1282.0 458.8 1284.7 454.6 1285.7 453.3" stroke-width="2"/>
<path d="M1265.3 506.3 C1266.7 503.2 1270.1 493.1 1273.5 488 C1276.9 482.9 1281.3 480.1 1285.7 475.7 C1290.1 471.3 1292.5 467.5 1300 461.4 C1307.5 455.3 1322.8 444.1 1331 439 C1339.2 433.9 1343.6 433.5 1349.4 430.8 C1355.2 428.1 1360.3 426.4 1365.7 422.7 C1371.1 419.0 1377.2 413.0 1382 408.4 C1386.8 403.8 1392.2 397.3 1394.3 395.1" stroke-width="3.6"/>
<path d="M1280 459.4 C1280.8 458.5 1283.9 455.7 1285.1 454.3 C1286.3 452.9 1286.8 451.7 1287.1 451.2" stroke-width="1.6"/>
<path d="M1402.4 410.4 C1405.1 414.8 1413.3 430.8 1418.8 436.9 C1424.2 443.0 1430.0 443.4 1435.1 447.1 C1440.2 450.9 1445.3 455.0 1449.4 459.4 C1453.5 463.8 1455.9 467.9 1459.6 473.7 C1463.3 479.5 1467.7 486.3 1471.8 494.1 C1475.9 501.9 1481.9 514.1 1484.1 520.6 C1486.3 527.1 1485.4 527.5 1485.1 532.9 C1484.8 538.3 1483.5 546.5 1482 553.3 C1480.5 560.1 1478.3 567.2 1475.9 573.7 C1473.5 580.2 1469.2 588.6 1467.8 592 C1466.4 595.4 1466.9 590.4 1467.8 594.1 C1468.7 597.9 1471.2 608.0 1472.9 614.5 C1474.6 621.0 1475.8 625.4 1478 632.9 C1480.2 640.4 1483.0 651.6 1486.1 659.4 C1489.1 667.2 1490.5 672.0 1496.3 679.8 C1502.1 687.6 1513.0 697.8 1520.8 706.3 C1528.6 714.8 1538.2 724.3 1543.3 730.8 C1548.4 737.3 1547.7 738.6 1551.4 745.1 C1555.1 751.6 1561.6 762.8 1565.7 769.6 C1569.8 776.4 1574.2 779.1 1575.9 785.9 C1577.6 792.7 1576.1 799.5 1575.9 810.4 C1575.7 821.3 1576.6 842.0 1574.9 851.2 C1573.2 860.4 1567.9 860.7 1565.7 865.5 C1563.5 870.3 1562.9 874.7 1561.6 879.8 C1560.2 884.9 1559.3 890.0 1557.6 896.1 C1555.9 902.2 1554.5 909.7 1551.4 916.5 C1548.3 923.3 1542.1 930.8 1539.2 936.9 C1536.3 943.0 1534.4 947.2 1534.1 953.3 C1533.8 959.4 1536.1 967.1 1537.1 973.7 C1538.1 980.3 1539.7 989.9 1540.2 993.1" stroke-width="2.8"/>
<path d="M1231.6 712.4 C1235.7 710.7 1247.6 705.2 1256.1 702.2 C1264.6 699.2 1277.7 695.5 1282.7 694.1 C1287.7 692.8 1276.3 698.0 1286.1 694.1 C1295.8 690.2 1318.4 679.1 1341.2 670.6 C1364.0 662.1 1400.8 650.6 1422.9 643.1 C1445.0 635.6 1447.7 634.6 1473.9 625.7 C1500.1 616.9 1555.8 599.1 1580 590 C1604.2 580.9 1596.4 581.9 1619 571.3 C1641.6 560.7 1689.0 538.4 1715.5 526.2 C1742.0 514.0 1759.6 506.0 1777.7 498.2 C1795.8 490.4 1807.2 484.4 1824.3 479.5 C1841.3 474.6 1870.7 470.4 1880 468.6" stroke-width="3.6"/>
<path d="M1211.2 778.8 C1213.2 778.4 1216.7 776.9 1223.5 776.7 C1230.3 776.5 1242.0 777.4 1252 777.8 C1262.0 778.1 1273.5 778.5 1283.7 778.8 C1293.9 779.1 1306.3 778.6 1313.3 779.8 C1320.3 781.0 1315.1 781.8 1325.5 785.9 C1335.9 790.0 1357.6 798.2 1375.9 804.3 C1394.2 810.4 1421.8 818.6 1435.1 822.7 C1448.4 826.8 1444.3 826.6 1455.5 828.8 C1466.7 831.0 1492.2 834.4 1502.4 835.9 C1512.6 837.4 1509.9 836.1 1516.7 838 C1523.5 839.9 1535.8 845.1 1543.3 847.1 C1550.8 849.1 1555.5 849.4 1561.6 850.2 C1567.7 851.1 1573.5 851.0 1580 852.2 C1586.5 853.4 1588.8 854.4 1600.4 857.3 C1612.0 860.2 1629.0 867.7 1649.4 869.6 C1669.8 871.5 1701.1 868.4 1722.9 868.6 C1744.7 868.8 1769.1 870.1 1780 870.6 C1790.9 871.1 1781.0 870.2 1788.2 871.6 C1795.4 873.0 1815.4 876.8 1822.9 878.8 C1830.4 880.8 1829.4 879.0 1833.1 883.9 C1836.8 888.8 1840.2 898.9 1845.3 908.4 C1850.4 917.9 1859.6 933.5 1863.7 941 C1867.8 948.5 1868.8 951.2 1869.8 953.3" stroke-width="2.6"/>
<path d="M1030.6 851.2 C1029.9 852.2 1028.9 853.2 1026.5 857.3 C1024.1 861.4 1019.3 871.6 1016.3 875.7 C1013.2 879.8 1008.2 882.1 1008.2 881.8 C1008.2 881.5 1017.2 873.9 1016.6 873.9 C1016.0 873.9 1011.4 878.7 1004.9 881.6 C998.4 884.5 984.8 888.1 977.7 891.4 C970.6 894.6 971.3 896.6 962.2 901.1 C953.1 905.6 936.3 912.5 923.3 918.6 C910.3 924.8 894.1 932.8 884.4 938 C874.7 943.2 870.2 945.8 865 949.7 C859.8 953.6 857.8 956.5 853.3 961.4 C848.8 966.2 842.2 973.6 837.7 978.8 C833.2 984.0 828.4 989.7 826.1 992.5 C823.8 995.3 824.4 994.9 824.1 995.4" stroke-width="3.6"/>
<path d="M1151 832.9 C1152.0 833.9 1153.3 835.6 1157.1 839 C1160.8 842.4 1168.4 849.2 1173.5 853.3 C1178.6 857.4 1183.0 860.8 1187.8 863.5 C1192.5 866.2 1198.3 865.9 1202 869.6 C1205.7 873.3 1207.1 879.8 1210.2 885.9 C1213.3 892.0 1217.0 898.8 1220.4 906.3 C1223.8 913.8 1226.5 923.0 1230.6 930.8 C1234.7 938.6 1240.5 946.1 1244.9 953.3 C1249.3 960.4 1253.4 968.3 1257.1 973.7 C1260.8 979.1 1264.9 982.7 1267.3 985.9 C1269.7 989.1 1270.7 991.9 1271.4 993.1" stroke-width="3.6"/>
<path d="M1110.2 951.2 C1110.9 953.6 1112.4 958.5 1114.3 965.5 C1116.2 972.5 1120.2 988.5 1121.4 993.1" stroke-width="2"/>
<path d="M962.2 955.5 L958.3 992.5" stroke-width="2"/>
<path d="M1273.5 981.8 C1275.5 982.1 1281.3 982.5 1285.7 983.9 C1290.1 985.3 1297.6 989.0 1300 990" stroke-width="2"/>
<path d="M1280 980.8 C1282.0 981.6 1288.5 983.8 1292.2 985.9 C1295.9 988.0 1300.7 991.9 1302.4 993.1" stroke-width="2"/>
<path d="M695.4 394 C696.2 395.0 698.8 398.1 700.1 400.2 C701.4 402.3 702.7 405.4 703.2 406.4" stroke-width="1.2"/>
</g></g>
<g font-family="Liberation Sans, sans-serif">
<text x="712" y="416.832" text-anchor="middle" font-size="16.2" fill="#202124" stroke="#fff" stroke-width="3" stroke-linejoin="round" paint-order="stroke" opacity="1">Helotes</text>
<text x="236" y="455.832" text-anchor="middle" font-size="16.2" fill="#202124" stroke="#fff" stroke-width="3" stroke-linejoin="round" paint-order="stroke" opacity="1">Mico</text>
<text x="312" y="691.832" text-anchor="middle" font-size="16.2" fill="#202124" stroke="#fff" stroke-width="3" stroke-linejoin="round" paint-order="stroke" opacity="1">Rio Medina</text>
<text x="323" y="880.832" text-anchor="middle" font-size="16.2" fill="#202124" stroke="#fff" stroke-width="3" stroke-linejoin="round" paint-order="stroke" opacity="1">Castroville</text>
<text x="455" y="984.832" text-anchor="middle" font-size="16.2" fill="#202124" stroke="#fff" stroke-width="3" stroke-linejoin="round" paint-order="stroke" opacity="1">Lacoste</text>
<text x="691" y="947.832" text-anchor="middle" font-size="16.2" fill="#202124" stroke="#fff" stroke-width="3" stroke-linejoin="round" paint-order="stroke" opacity="1">Macdona</text>
<text x="833" y="566.832" text-anchor="middle" font-size="16.2" fill="#202124" stroke="#fff" stroke-width="3" stroke-linejoin="round" paint-order="stroke" opacity="1">Leon Valley</text>
<text x="1022" y="481.832" text-anchor="middle" font-size="16.2" fill="#202124" stroke="#fff" stroke-width="3" stroke-linejoin="round" paint-order="stroke" opacity="1">Castle Hills</text>
<text x="1259" y="485.832" text-anchor="middle" font-size="16.2" fill="#202124" stroke="#fff" stroke-width="3" stroke-linejoin="round" paint-order="stroke" opacity="1">Longhorn</text>
<text x="1299" y="517.832" text-anchor="middle" font-size="16.2" fill="#202124" stroke="#fff" stroke-width="3" stroke-linejoin="round" paint-order="stroke" opacity="1">Windcrest</text>
<text x="1391" y="412.832" text-anchor="middle" font-size="16.2" fill="#202124" stroke="#fff" stroke-width="3" stroke-linejoin="round" paint-order="stroke" opacity="1">Live Oak</text>
<text x="1450" y="437.832" text-anchor="middle" font-size="16.2" fill="#202124" stroke="#fff" stroke-width="3" stroke-linejoin="round" paint-order="stroke" opacity="1">Universal City</text>
<text x="1524" y="417.832" text-anchor="middle" font-size="16.2" fill="#202124" stroke="#fff" stroke-width="3" stroke-linejoin="round" paint-order="stroke" opacity="1">Schertz</text>
<text x="1604" y="418.832" text-anchor="middle" font-size="16.2" fill="#202124" stroke="#fff" stroke-width="3" stroke-linejoin="round" paint-order="stroke" opacity="1">Cibolo</text>
<text x="1446" y="540.832" text-anchor="middle" font-size="16.2" fill="#202124" stroke="#fff" stroke-width="3" stroke-linejoin="round" paint-order="stroke" opacity="1">Converse</text>
<text x="1299" y="646.832" text-anchor="middle" font-size="16.2" fill="#202124" stroke="#fff" stroke-width="3" stroke-linejoin="round" paint-order="stroke" opacity="1">Kirby</text>
<text x="1810" y="528.832" text-anchor="middle" font-size="16.2" fill="#202124" stroke="#fff" stroke-width="3" stroke-linejoin="round" paint-order="stroke" opacity="1">Santa Clara</text>
<text x="1750" y="571.832" text-anchor="middle" font-size="16.2" fill="#202124" stroke="#fff" stroke-width="3" stroke-linejoin="round" paint-order="stroke" opacity="1">Zuehl</text>
<text x="1387" y="742.832" text-anchor="middle" font-size="16.2" fill="#202124" stroke="#fff" stroke-width="3" stroke-linejoin="round" paint-order="stroke" opacity="1">Martinez</text>
<text x="1641" y="746.832" text-anchor="middle" font-size="16.2" fill="#202124" stroke="#fff" stroke-width="3" stroke-linejoin="round" paint-order="stroke" opacity="1">St Hedwig</text>
<text x="1364" y="805.832" text-anchor="middle" font-size="16.2" fill="#202124" stroke="#fff" stroke-width="3" stroke-linejoin="round" paint-order="stroke" opacity="1">China Grove</text>
<text x="1583" y="796.832" text-anchor="middle" font-size="16.2" fill="#202124" stroke="#fff" stroke-width="3" stroke-linejoin="round" paint-order="stroke" opacity="1">Adkins</text>
<text x="1479" y="839.832" text-anchor="middle" font-size="16.2" fill="#202124" stroke="#fff" stroke-width="3" stroke-linejoin="round" paint-order="stroke" opacity="1">Sayers</text>
<text x="1682" y="830.832" text-anchor="middle" font-size="16.2" fill="#202124" stroke="#fff" stroke-width="3" stroke-linejoin="round" paint-order="stroke" opacity="1">Carpenter</text>
<text x="1822" y="878.832" text-anchor="middle" font-size="16.2" fill="#202124" stroke="#fff" stroke-width="3" stroke-linejoin="round" paint-order="stroke" opacity="1">La Vernia</text>
<text x="1819" y="627.832" text-anchor="start" font-size="16.2" fill="#202124" stroke="#fff" stroke-width="3" stroke-linejoin="round" paint-order="stroke" opacity="1">New Braunfels</text>
<text x="1640" y="980.832" text-anchor="middle" font-size="16.2" fill="#202124" stroke="#fff" stroke-width="3" stroke-linejoin="round" paint-order="stroke" opacity="0.45">Kicaster</text>
<text x="934" y="571.832" text-anchor="start" font-size="16.2" fill="#202124" stroke="#fff" stroke-width="3" stroke-linejoin="round" paint-order="stroke" opacity="1">Balcones</text>
<text x="940" y="587.832" text-anchor="start" font-size="16.2" fill="#202124" stroke="#fff" stroke-width="3" stroke-linejoin="round" paint-order="stroke" opacity="1">Heights</text>
<text x="741" y="458.176" text-anchor="middle" font-size="11.6" letter-spacing="1.2" fill="#50555d" stroke="#fff" stroke-width="2.8" stroke-linejoin="round" paint-order="stroke">BRAUN'S FARM</text>
<text x="827" y="488.176" text-anchor="middle" font-size="11.6" letter-spacing="1.2" fill="#50555d" stroke="#fff" stroke-width="2.8" stroke-linejoin="round" paint-order="stroke">ALAMO</text>
<text x="827" y="500.676" text-anchor="middle" font-size="11.6" letter-spacing="1.2" fill="#50555d" stroke="#fff" stroke-width="2.8" stroke-linejoin="round" paint-order="stroke">FARMSTEADS</text>
<text x="665" y="567.176" text-anchor="middle" font-size="11.6" letter-spacing="1.2" fill="#50555d" stroke="#fff" stroke-width="2.8" stroke-linejoin="round" paint-order="stroke">FAR WEST SIDE</text>
<text x="854" y="623.176" text-anchor="middle" font-size="11.6" letter-spacing="1.2" fill="#50555d" stroke="#fff" stroke-width="2.8" stroke-linejoin="round" paint-order="stroke">THUNDERBIRD</text>
<text x="854" y="635.676" text-anchor="middle" font-size="11.6" letter-spacing="1.2" fill="#50555d" stroke="#fff" stroke-width="2.8" stroke-linejoin="round" paint-order="stroke">HILLS</text>
<text x="998" y="424.176" text-anchor="middle" font-size="11.6" letter-spacing="1.2" fill="#50555d" stroke="#fff" stroke-width="2.8" stroke-linejoin="round" paint-order="stroke">NORTH CENTRAL</text>
<text x="1221" y="415.176" text-anchor="middle" font-size="11.6" letter-spacing="1.2" fill="#50555d" stroke="#fff" stroke-width="2.8" stroke-linejoin="round" paint-order="stroke">UPTOWN</text>
<text x="1284" y="399.176" text-anchor="middle" font-size="11.6" letter-spacing="1.2" fill="#50555d" stroke="#fff" stroke-width="2.8" stroke-linejoin="round" paint-order="stroke">FERTILE VALLEY</text>
<text x="759" y="765.676" text-anchor="middle" font-size="11.6" letter-spacing="1.2" fill="#50555d" stroke="#fff" stroke-width="2.8" stroke-linejoin="round" paint-order="stroke">RAINBOW HILLS</text>
<text x="830" y="807.676" text-anchor="middle" font-size="11.6" letter-spacing="1.2" fill="#50555d" stroke="#fff" stroke-width="2.8" stroke-linejoin="round" paint-order="stroke">LACKLAND AFB</text>
<text x="871" y="900.176" text-anchor="middle" font-size="11.6" letter-spacing="1.2" fill="#50555d" stroke="#fff" stroke-width="2.8" stroke-linejoin="round" paint-order="stroke">HIDDEN COVE</text>
<text x="873" y="913.176" text-anchor="middle" font-size="11.6" letter-spacing="1.2" fill="#50555d" stroke="#fff" stroke-width="2.8" stroke-linejoin="round" paint-order="stroke">- INDIAN CREEK</text>
<text x="962" y="939.176" text-anchor="middle" font-size="11.6" letter-spacing="1.2" fill="#50555d" stroke="#fff" stroke-width="2.8" stroke-linejoin="round" paint-order="stroke">SOUTH</text>
<text x="962" y="951.676" text-anchor="middle" font-size="11.6" letter-spacing="1.2" fill="#50555d" stroke="#fff" stroke-width="2.8" stroke-linejoin="round" paint-order="stroke">SOUTHWEST</text>
<text x="1183" y="858.176" text-anchor="middle" font-size="11.6" letter-spacing="1.2" fill="#50555d" stroke="#fff" stroke-width="2.8" stroke-linejoin="round" paint-order="stroke">HIGHLAND HILLS</text>
<text x="1175" y="895.176" text-anchor="middle" font-size="11.6" letter-spacing="1.2" fill="#50555d" stroke="#fff" stroke-width="2.8" stroke-linejoin="round" paint-order="stroke">BROOKS</text>
<text x="1175" y="907.176" text-anchor="middle" font-size="11.6" letter-spacing="1.2" fill="#50555d" stroke="#fff" stroke-width="2.8" stroke-linejoin="round" paint-order="stroke">CITY BASE</text>
<text x="1262" y="763.176" text-anchor="end" font-size="11.6" letter-spacing="1.2" fill="#50555d" stroke="#fff" stroke-width="2.8" stroke-linejoin="round" paint-order="stroke">EAST SIDE</text>
<text x="905.5" y="699.176" text-anchor="start" font-size="11.6" letter-spacing="1.2" fill="#50555d" stroke="#fff" stroke-width="2.8" stroke-linejoin="round" paint-order="stroke">INNER</text>
<text x="891" y="712.176" text-anchor="start" font-size="11.6" letter-spacing="1.2" fill="#50555d" stroke="#fff" stroke-width="2.8" stroke-linejoin="round" paint-order="stroke">WEST SIDE</text>
<path id="wzp" d="M1102 433.9 C1105.1 436.2 1113.9 444.2 1120.4 447.8 C1126.9 451.4 1133.7 454.7 1140.8 455.7 C1147.9 456.7 1154.8 454.9 1163.3 453.7 C1171.8 452.4 1187.0 449.1 1191.8 448.2" fill="none"/>
<text font-size="13.6" fill="#7c4a12" stroke="#fff" stroke-width="2.6" stroke-linejoin="round" paint-order="stroke"><textPath href="#wzp" startOffset="1">Wurzbach Pkwy</textPath></text>
</g>
<g font-family="Liberation Sans, sans-serif">
<rect x="452.8" y="491.8" width="28.5" height="18.5" rx="7.5" ry="7.5" fill="#fff" stroke="#4d4d4d" stroke-width="1.4"/>
<text x="467.0" y="505.3" text-anchor="middle" font-size="12" fill="#444">211</text>
<rect x="521.8" y="777.8" width="28.5" height="18.5" rx="7.5" ry="7.5" fill="#fff" stroke="#4d4d4d" stroke-width="1.4"/>
<text x="536.0" y="791.3" text-anchor="middle" font-size="12" fill="#444">211</text>
<rect x="648.5" y="768.8" width="35" height="18.5" rx="7.5" ry="7.5" fill="#fff" stroke="#4d4d4d" stroke-width="1.4"/>
<text x="666.0" y="782.3" text-anchor="middle" font-size="12" fill="#444">1604</text>
<rect x="664.5" y="833.8" width="35" height="18.5" rx="7.5" ry="7.5" fill="#fff" stroke="#4d4d4d" stroke-width="1.4"/>
<text x="682.0" y="847.3" text-anchor="middle" font-size="12" fill="#444">1604</text>
<rect x="1457.5" y="495.8" width="35" height="18.5" rx="7.5" ry="7.5" fill="#fff" stroke="#4d4d4d" stroke-width="1.4"/>
<text x="1475.0" y="509.3" text-anchor="middle" font-size="12" fill="#444">1604</text>
<rect x="1472.5" y="661.8" width="35" height="18.5" rx="7.5" ry="7.5" fill="#fff" stroke="#4d4d4d" stroke-width="1.4"/>
<text x="1490.0" y="675.3" text-anchor="middle" font-size="12" fill="#444">1604</text>
<rect x="1541.5" y="746.8" width="35" height="18.5" rx="7.5" ry="7.5" fill="#fff" stroke="#4d4d4d" stroke-width="1.4"/>
<text x="1559.0" y="760.3" text-anchor="middle" font-size="12" fill="#444">1604</text>
<rect x="1537.5" y="896.8" width="35" height="18.5" rx="7.5" ry="7.5" fill="#fff" stroke="#4d4d4d" stroke-width="1.4"/>
<text x="1555.0" y="910.3" text-anchor="middle" font-size="12" fill="#444">1604</text>
<rect x="765.8" y="687.8" width="28.5" height="18.5" rx="7.5" ry="7.5" fill="#fff" stroke="#4d4d4d" stroke-width="1.4"/>
<text x="780.0" y="701.3" text-anchor="middle" font-size="12" fill="#444">151</text>
<rect x="1182.8" y="553.8" width="28.5" height="18.5" rx="7.5" ry="7.5" fill="#fff" stroke="#4d4d4d" stroke-width="1.4"/>
<text x="1197.0" y="567.3" text-anchor="middle" font-size="12" fill="#444">368</text>
<rect x="1241.5" y="730.8" width="23" height="18.5" rx="7.5" ry="7.5" fill="#fff" stroke="#4d4d4d" stroke-width="1.4"/>
<text x="1253.0" y="744.3" text-anchor="middle" font-size="12" fill="#444">13</text>
<rect x="885.5" y="843.8" width="23" height="18.5" rx="7.5" ry="7.5" fill="#fff" stroke="#4d4d4d" stroke-width="1.4"/>
<text x="897.0" y="857.3" text-anchor="middle" font-size="12" fill="#444">13</text>
<rect x="1102.5" y="869.8" width="23" height="18.5" rx="7.5" ry="7.5" fill="#fff" stroke="#4d4d4d" stroke-width="1.4"/>
<text x="1114.0" y="883.3" text-anchor="middle" font-size="12" fill="#444">13</text>
<rect x="928.8" y="863.8" width="28.5" height="18.5" rx="7.5" ry="7.5" fill="#fff" stroke="#4d4d4d" stroke-width="1.4"/>
<text x="943.0" y="877.3" text-anchor="middle" font-size="12" fill="#444">353</text>
<rect x="1150.8" y="915.8" width="28.5" height="18.5" rx="7.5" ry="7.5" fill="#fff" stroke="#4d4d4d" stroke-width="1.4"/>
<text x="1165.0" y="929.3" text-anchor="middle" font-size="12" fill="#444">122</text>
<rect x="912.8" y="610.8" width="28.5" height="18.5" rx="7.5" ry="7.5" fill="#fff" stroke="#4d4d4d" stroke-width="1.4"/>
<text x="927.0" y="624.3" text-anchor="middle" font-size="12" fill="#444">421</text>
<rect x="1088.8" y="848.8" width="28.5" height="18.5" rx="7.5" ry="7.5" fill="#fff" stroke="#4d4d4d" stroke-width="1.4"/>
<text x="1103.0" y="862.3" text-anchor="middle" font-size="12" fill="#444">536</text>
<path d="M252.4 880.0 Q256.7 883.5 261.0 880.7 Q265.3 883.5 269.6 880.0 L273.0 883.1 Q270.6 886.6 272.5 891.4 Q273.0 898.9 263.9 900.2 L261.0 902.0 L258.1 900.2 Q249.0 898.9 249.5 891.4 Q251.4 886.6 249.0 883.1 Z" fill="#fff" stroke="#4d4d4d" stroke-width="1.4" stroke-linejoin="round"/>
<text x="261.0" y="895.6" text-anchor="middle" font-size="12" fill="#444">90</text>
<path d="M663.4 805.0 Q667.7 808.5 672.0 805.7 Q676.3 808.5 680.6 805.0 L684.0 808.1 Q681.6 811.6 683.5 816.4 Q684.0 823.9 674.9 825.2 L672.0 827.0 L669.1 825.2 Q660.0 823.9 660.5 816.4 Q662.4 811.6 660.0 808.1 Z" fill="#fff" stroke="#4d4d4d" stroke-width="1.4" stroke-linejoin="round"/>
<text x="672.0" y="820.6" text-anchor="middle" font-size="12" fill="#444">90</text>
<path d="M721.4 789.0 Q725.7 792.5 730.0 789.7 Q734.3 792.5 738.6 789.0 L742.0 792.1 Q739.6 795.6 741.5 800.4 Q742.0 807.9 732.9 809.2 L730.0 811.0 L727.1 809.2 Q718.0 807.9 718.5 800.4 Q720.4 795.6 718.0 792.1 Z" fill="#fff" stroke="#4d4d4d" stroke-width="1.4" stroke-linejoin="round"/>
<text x="730.0" y="804.6" text-anchor="middle" font-size="12" fill="#444">90</text>
<path d="M899.4 748.0 Q903.7 751.5 908.0 748.7 Q912.3 751.5 916.6 748.0 L920.0 751.1 Q917.6 754.6 919.5 759.4 Q920.0 766.9 910.9 768.2 L908.0 770.0 L905.1 768.2 Q896.0 766.9 896.5 759.4 Q898.4 754.6 896.0 751.1 Z" fill="#fff" stroke="#4d4d4d" stroke-width="1.4" stroke-linejoin="round"/>
<text x="908.0" y="763.6" text-anchor="middle" font-size="12" fill="#444">90</text>
<path d="M1093.1 489.0 Q1098.0 492.5 1103.0 489.7 Q1108.0 492.5 1112.9 489.0 L1116.8 492.1 Q1114.0 495.6 1116.2 500.4 Q1116.8 507.9 1106.3 509.2 L1103.0 511.0 L1099.7 509.2 Q1089.2 507.9 1089.8 500.4 Q1092.0 495.6 1089.2 492.1 Z" fill="#fff" stroke="#4d4d4d" stroke-width="1.4" stroke-linejoin="round"/>
<text x="1103.0" y="504.6" text-anchor="middle" font-size="12" fill="#444">281</text>
<path d="M1229.4 768.0 Q1233.7 771.5 1238.0 768.7 Q1242.3 771.5 1246.6 768.0 L1250.0 771.1 Q1247.6 774.6 1249.5 779.4 Q1250.0 786.9 1240.9 788.2 L1238.0 790.0 L1235.1 788.2 Q1226.0 786.9 1226.5 779.4 Q1228.4 774.6 1226.0 771.1 Z" fill="#fff" stroke="#4d4d4d" stroke-width="1.4" stroke-linejoin="round"/>
<text x="1238.0" y="783.6" text-anchor="middle" font-size="12" fill="#444">87</text>
<path d="M1520.4 832.0 Q1524.7 835.5 1529.0 832.7 Q1533.3 835.5 1537.6 832.0 L1541.0 835.1 Q1538.6 838.6 1540.5 843.4 Q1541.0 850.9 1531.9 852.2 L1529.0 854.0 L1526.1 852.2 Q1517.0 850.9 1517.5 843.4 Q1519.4 838.6 1517.0 835.1 Z" fill="#fff" stroke="#4d4d4d" stroke-width="1.4" stroke-linejoin="round"/>
<text x="1529.0" y="847.6" text-anchor="middle" font-size="12" fill="#444">87</text>
<path d="M1858.4 941.0 Q1862.7 944.5 1867.0 941.7 Q1871.3 944.5 1875.6 941.0 L1879.0 944.1 Q1876.6 947.6 1878.5 952.4 Q1879.0 959.9 1869.9 961.2 L1867.0 963.0 L1864.1 961.2 Q1855.0 959.9 1855.5 952.4 Q1857.4 947.6 1855.0 944.1 Z" fill="#fff" stroke="#4d4d4d" stroke-width="1.4" stroke-linejoin="round"/>
<text x="1867.0" y="956.6" text-anchor="middle" font-size="12" fill="#444">87</text>
<path d="M782.8 669.7 L809.2 669.7 L809.2 672.2 L782.8 672.2 Z" fill="#fff"/>
<path d="M783.2 670.4 L784.0 666.8 Q789.4 668.8 796.0 666.2 Q802.6 668.8 808.0 666.8 L808.8 670.4 Z" fill="#dc5a60"/>
<path d="M782.8 671.6 L809.2 671.6 Q809.5 683.0 796.0 687.8 Q782.5 683.0 782.8 671.6 Z" fill="#3d7bcc"/>
<text x="796.0" y="683.0" text-anchor="middle" font-size="12" font-weight="bold" fill="#fff">410</text>
<path d="M1031.8 496.7 L1058.2 496.7 L1058.2 499.2 L1031.8 499.2 Z" fill="#fff"/>
<path d="M1032.2 497.4 L1033.0 493.8 Q1038.4 495.8 1045.0 493.2 Q1051.6 495.8 1057.0 493.8 L1057.8 497.4 Z" fill="#dc5a60"/>
<path d="M1031.8 498.6 L1058.2 498.6 Q1058.5 510.0 1045.0 514.8 Q1031.5 510.0 1031.8 498.6 Z" fill="#3d7bcc"/>
<text x="1045.0" y="510.0" text-anchor="middle" font-size="12" font-weight="bold" fill="#fff">410</text>
<path d="M1249.8 543.7 L1276.2 543.7 L1276.2 546.2 L1249.8 546.2 Z" fill="#fff"/>
<path d="M1250.2 544.4 L1251.0 540.8 Q1256.4 542.8 1263.0 540.2 Q1269.6 542.8 1275.0 540.8 L1275.8 544.4 Z" fill="#dc5a60"/>
<path d="M1249.8 545.6 L1276.2 545.6 Q1276.5 557.0 1263.0 561.8 Q1249.5 557.0 1249.8 545.6 Z" fill="#3d7bcc"/>
<text x="1263.0" y="557.0" text-anchor="middle" font-size="12" font-weight="bold" fill="#fff">410</text>
<path d="M1040.8 947.7 L1067.2 947.7 L1067.2 950.2 L1040.8 950.2 Z" fill="#fff"/>
<path d="M1041.2 948.4 L1042.0 944.8 Q1047.4 946.8 1054.0 944.2 Q1060.6 946.8 1066.0 944.8 L1066.8 948.4 Z" fill="#dc5a60"/>
<path d="M1040.8 949.6 L1067.2 949.6 Q1067.5 961.0 1054.0 965.8 Q1040.5 961.0 1040.8 949.6 Z" fill="#3d7bcc"/>
<text x="1054.0" y="961.0" text-anchor="middle" font-size="12" font-weight="bold" fill="#fff">410</text>
<path d="M1176.8 941.7 L1203.2 941.7 L1203.2 944.2 L1176.8 944.2 Z" fill="#fff"/>
<path d="M1177.2 942.4 L1178.0 938.8 Q1183.4 940.8 1190.0 938.2 Q1196.6 940.8 1202.0 938.8 L1202.8 942.4 Z" fill="#dc5a60"/>
<path d="M1176.8 943.6 L1203.2 943.6 Q1203.5 955.0 1190.0 959.8 Q1176.5 955.0 1176.8 943.6 Z" fill="#3d7bcc"/>
<text x="1190.0" y="955.0" text-anchor="middle" font-size="12" font-weight="bold" fill="#fff">410</text>
<path d="M944.0 482.7 L964.0 482.7 L964.0 485.2 L944.0 485.2 Z" fill="#fff"/>
<path d="M944.5 483.4 L945.2 479.8 Q949.0 481.8 954.0 479.2 Q959.0 481.8 962.8 479.8 L963.5 483.4 Z" fill="#dc5a60"/>
<path d="M944.0 484.6 L964.0 484.6 Q964.3 496.0 954.0 500.8 Q943.7 496.0 944.0 484.6 Z" fill="#3d7bcc"/>
<text x="954.0" y="496.0" text-anchor="middle" font-size="12" font-weight="bold" fill="#fff">10</text>
<path d="M1301.0 676.7 L1321.0 676.7 L1321.0 679.2 L1301.0 679.2 Z" fill="#fff"/>
<path d="M1301.5 677.4 L1302.2 673.8 Q1306.0 675.8 1311.0 673.2 Q1316.0 675.8 1319.8 673.8 L1320.5 677.4 Z" fill="#dc5a60"/>
<path d="M1301.0 678.6 L1321.0 678.6 Q1321.3 690.0 1311.0 694.8 Q1300.7 690.0 1301.0 678.6 Z" fill="#3d7bcc"/>
<text x="1311.0" y="690.0" text-anchor="middle" font-size="12" font-weight="bold" fill="#fff">10</text>
<path d="M1609.0 566.7 L1629.0 566.7 L1629.0 569.2 L1609.0 569.2 Z" fill="#fff"/>
<path d="M1609.5 567.4 L1610.2 563.8 Q1614.0 565.8 1619.0 563.2 Q1624.0 565.8 1627.8 563.8 L1628.5 567.4 Z" fill="#dc5a60"/>
<path d="M1609.0 568.6 L1629.0 568.6 Q1629.3 580.0 1619.0 584.8 Q1608.7 580.0 1609.0 568.6 Z" fill="#3d7bcc"/>
<text x="1619.0" y="580.0" text-anchor="middle" font-size="12" font-weight="bold" fill="#fff">10</text>
<path d="M1329.0 428.7 L1349.0 428.7 L1349.0 431.2 L1329.0 431.2 Z" fill="#fff"/>
<path d="M1329.5 429.4 L1330.2 425.8 Q1334.0 427.8 1339.0 425.2 Q1344.0 427.8 1347.8 425.8 L1348.5 429.4 Z" fill="#dc5a60"/>
<path d="M1329.0 430.6 L1349.0 430.6 Q1349.3 442.0 1339.0 446.8 Q1328.7 442.0 1329.0 430.6 Z" fill="#3d7bcc"/>
<text x="1339.0" y="442.0" text-anchor="middle" font-size="12" font-weight="bold" fill="#fff">35</text>
<path d="M966.0 892.7 L986.0 892.7 L986.0 895.2 L966.0 895.2 Z" fill="#fff"/>
<path d="M966.5 893.4 L967.2 889.8 Q971.0 891.8 976.0 889.2 Q981.0 891.8 984.8 889.8 L985.5 893.4 Z" fill="#dc5a60"/>
<path d="M966.0 894.6 L986.0 894.6 Q986.3 906.0 976.0 910.8 Q965.7 906.0 966.0 894.6 Z" fill="#3d7bcc"/>
<text x="976.0" y="906.0" text-anchor="middle" font-size="12" font-weight="bold" fill="#fff">35</text>
<path d="M1245.0 965.7 L1265.0 965.7 L1265.0 968.2 L1245.0 968.2 Z" fill="#fff"/>
<path d="M1245.5 966.4 L1246.2 962.8 Q1250.0 964.8 1255.0 962.2 Q1260.0 964.8 1263.8 962.8 L1264.5 966.4 Z" fill="#dc5a60"/>
<path d="M1245.0 967.6 L1265.0 967.6 Q1265.3 979.0 1255.0 983.8 Q1244.7 979.0 1245.0 967.6 Z" fill="#3d7bcc"/>
<text x="1255.0" y="979.0" text-anchor="middle" font-size="12" font-weight="bold" fill="#fff">37</text>
<path d="M808.0 992.7 L828.0 992.7 L828.0 995.2 L808.0 995.2 Z" fill="#fff"/>
<path d="M808.5 993.4 L809.2 989.8 Q813.0 991.8 818.0 989.2 Q823.0 991.8 826.8 989.8 L827.5 993.4 Z" fill="#dc5a60"/>
<path d="M808.0 994.6 L828.0 994.6 Q828.3 1006.0 818.0 1010.8 Q807.7 1006.0 808.0 994.6 Z" fill="#3d7bcc"/>
<text x="818.0" y="1006.0" text-anchor="middle" font-size="12" font-weight="bold" fill="#fff">35</text>
</g>
<defs><clipPath id="ndc"><polygon points="1232.4,720.2 1221.4,761.1 1200.3,797.8 1170.3,827.8 1133.6,848.9 1092.7,859.9 1050.3,859.9 1009.4,848.9 972.7,827.8 942.7,797.8 921.6,761.1 910.6,720.2 910.6,677.8 921.6,636.9 942.7,600.2 972.7,570.2 1009.4,549.1 1050.3,538.1 1092.7,538.1 1133.6,549.1 1170.3,570.2 1200.3,600.2 1221.4,636.9 1232.4,677.8"/></clipPath>
<filter id="bl6" x="-30%" y="-30%" width="160%" height="160%"><feGaussianBlur stdDeviation="5"/></filter>
<filter id="bl2" x="-30%" y="-30%" width="160%" height="160%"><feGaussianBlur stdDeviation="2"/></filter>
<filter id="grain" color-interpolation-filters="sRGB" x="0" y="0" width="100%" height="100%"><feTurbulence type="fractalNoise" baseFrequency="0.5" numOctaves="2" seed="3"/><feColorMatrix type="matrix" values="0 0 0 0 0.08  0 0 0 0 0.42  0 0 0 0 0.01  0 0 0 -7 2.95"/></filter>
<filter id="grain2" color-interpolation-filters="sRGB" x="0" y="0" width="100%" height="100%"><feTurbulence type="fractalNoise" baseFrequency="0.24" numOctaves="3" seed="11"/><feColorMatrix type="matrix" values="0 0 0 0 0.27  0 0 0 0 0.65  0 0 0 0 0.04  0 0 0 6 -2.95"/></filter>
<filter id="speck" color-interpolation-filters="sRGB" x="0" y="0" width="100%" height="100%"><feTurbulence type="fractalNoise" baseFrequency="0.33" numOctaves="3" seed="23"/><feColorMatrix type="matrix" values="0 0 0 0 0.27  0 0 0 0 0.36  0 0 0 0 0.06  0 0 0 12 -7.7"/></filter>
<filter id="mott" color-interpolation-filters="sRGB" x="-10%" y="-10%" width="120%" height="120%"><feGaussianBlur in="SourceGraphic" stdDeviation="2.2" result="b"/><feTurbulence type="fractalNoise" baseFrequency="0.2" numOctaves="3" seed="5" result="n"/><feColorMatrix in="n" type="matrix" values="0 0 0 0 0  0 0 0 0 0  0 0 0 0 0  0 0 0 9 -3.2" result="m"/><feComposite in="b" in2="m" operator="in"/></filter>
</defs>
<g clip-path="url(#ndc)">
<rect x="907.2" y="534.7" width="328.6" height="328.6" fill="#228d02"/>
<g filter="url(#bl6)">
<ellipse cx="1114.5" cy="605.5" rx="35.2" ry="55.3" fill="#86c600" opacity="0.95" transform="rotate(25 1114.5 605.5)"/>
<ellipse cx="1096.1" cy="647.4" rx="25.1" ry="25.1" fill="#8cc800" opacity="0.8" transform="rotate(0 1096.1 647.4)"/>
<ellipse cx="1203.4" cy="642.3" rx="18.4" ry="21.8" fill="#7cc000" opacity="0.8" transform="rotate(0 1203.4 642.3)"/>
<ellipse cx="983.8" cy="635.6" rx="30.2" ry="23.5" fill="#4aa402" opacity="0.6" transform="rotate(0 983.8 635.6)"/>
<ellipse cx="1134.7" cy="779.8" rx="30.2" ry="20.1" fill="#50a802" opacity="0.6" transform="rotate(0 1134.7 779.8)"/>
<ellipse cx="1027.4" cy="809.9" rx="26.8" ry="16.8" fill="#52aa02" opacity="0.6" transform="rotate(0 1027.4 809.9)"/>
<ellipse cx="1107.8" cy="592.0" rx="16.8" ry="20.1" fill="#c8e000" opacity="0.8" transform="rotate(0 1107.8 592.0)"/>
<ellipse cx="1171.5" cy="612.2" rx="33.5" ry="30.2" fill="#80c200" opacity="0.9" transform="rotate(0 1171.5 612.2)"/>
<ellipse cx="1087.7" cy="639.0" rx="16.8" ry="20.1" fill="#86c400" opacity="0.7" transform="rotate(0 1087.7 639.0)"/>
<ellipse cx="1211.8" cy="699.3" rx="16.8" ry="30.2" fill="#9ed000" opacity="0.9" transform="rotate(10 1211.8 699.3)"/>
<ellipse cx="1218.5" cy="726.1" rx="10.1" ry="13.4" fill="#e0f000" opacity="0.9" transform="rotate(0 1218.5 726.1)"/>
<ellipse cx="1201.7" cy="769.7" rx="13.4" ry="26.8" fill="#80c000" opacity="0.7" transform="rotate(0 1201.7 769.7)"/>
<ellipse cx="983.8" cy="746.3" rx="40.2" ry="20.1" fill="#5aa800" opacity="0.6" transform="rotate(0 983.8 746.3)"/>
<ellipse cx="950.3" cy="625.6" rx="30.2" ry="40.2" fill="#48a000" opacity="0.5" transform="rotate(0 950.3 625.6)"/>
<ellipse cx="1101.1" cy="806.6" rx="40.2" ry="23.5" fill="#5cac00" opacity="0.6" transform="rotate(0 1101.1 806.6)"/>
<ellipse cx="1081.0" cy="739.5" rx="5.0" ry="10.1" fill="#a0d000" opacity="0.8" transform="rotate(0 1081.0 739.5)"/>
<ellipse cx="1191.7" cy="625.6" rx="20.1" ry="13.4" fill="#88c800" opacity="0.6" transform="rotate(0 1191.7 625.6)"/>
</g>
<rect x="907.2" y="534.7" width="328.6" height="328.6" filter="url(#grain2)" opacity=".7"/>
<rect x="907.2" y="534.7" width="328.6" height="328.6" filter="url(#grain)" opacity=".5"/>
<rect x="907.2" y="534.7" width="328.6" height="328.6" filter="url(#speck)" opacity=".9"/>
<g filter="url(#mott)" fill="#535319">
<ellipse cx="1082.7" cy="707.7" rx="28.5" ry="36.9" opacity="0.85" transform="rotate(0 1082.7 707.7)"/>
<ellipse cx="1060.9" cy="685.9" rx="23.5" ry="15.1" opacity="0.85" transform="rotate(0 1060.9 685.9)"/>
<ellipse cx="1104.5" cy="726.1" rx="16.8" ry="26.8" opacity="0.85" transform="rotate(0 1104.5 726.1)"/>
<ellipse cx="1074.3" cy="746.3" rx="16.8" ry="18.4" opacity="0.85" transform="rotate(0 1074.3 746.3)"/>
<ellipse cx="1101.1" cy="682.6" rx="20.1" ry="13.4" opacity="0.85" transform="rotate(0 1101.1 682.6)"/>
<ellipse cx="1191.7" cy="706.0" rx="13.4" ry="23.5" opacity="0.85" transform="rotate(0 1191.7 706.0)"/>
<ellipse cx="1201.7" cy="669.2" rx="20.1" ry="11.7" opacity="0.85" transform="rotate(-35 1201.7 669.2)"/>
<ellipse cx="1174.9" cy="665.8" rx="16.8" ry="13.4" opacity="0.85" transform="rotate(0 1174.9 665.8)"/>
<ellipse cx="1211.8" cy="685.9" rx="10.1" ry="16.8" opacity="0.85" transform="rotate(0 1211.8 685.9)"/>
<ellipse cx="1141.4" cy="696.0" rx="26.8" ry="4.7" opacity="0.85" transform="rotate(0 1141.4 696.0)"/>
<ellipse cx="980.5" cy="813.3" rx="8.4" ry="11.7" opacity="0.85" transform="rotate(0 980.5 813.3)"/>
<ellipse cx="1037.4" cy="746.3" rx="8.4" ry="10.1" opacity="0.85" transform="rotate(0 1037.4 746.3)"/>
<ellipse cx="1017.3" cy="749.6" rx="6.7" ry="5.0" opacity="0.85" transform="rotate(0 1017.3 749.6)"/>
<ellipse cx="1148.1" cy="816.7" rx="6.0" ry="13.4" opacity="0.85" transform="rotate(0 1148.1 816.7)"/>
<ellipse cx="1084.4" cy="786.5" rx="6.0" ry="13.4" opacity="0.85" transform="rotate(0 1084.4 786.5)"/>
<ellipse cx="1211.8" cy="722.8" rx="8.4" ry="5.0" opacity="0.85" transform="rotate(-30 1211.8 722.8)"/>
<ellipse cx="990.5" cy="592.0" rx="16.8" ry="4.7" opacity="0.85" transform="rotate(50 990.5 592.0)"/>
<ellipse cx="1067.6" cy="568.6" rx="7.4" ry="10.1" opacity="0.85" transform="rotate(0 1067.6 568.6)"/>
<ellipse cx="1104.5" cy="561.9" rx="4.7" ry="11.7" opacity="0.85" transform="rotate(0 1104.5 561.9)"/>
<ellipse cx="1178.2" cy="776.4" rx="4.7" ry="6.7" opacity="0.85" transform="rotate(0 1178.2 776.4)"/>
<ellipse cx="957.0" cy="779.8" rx="4.7" ry="7.4" opacity="0.85" transform="rotate(0 957.0 779.8)"/>
<ellipse cx="1107.8" cy="639.0" rx="6.7" ry="4.0" opacity="0.85" transform="rotate(0 1107.8 639.0)"/>
<ellipse cx="1139.0" cy="625.6" rx="3.4" ry="30.2" opacity="0.8" transform="rotate(8 1139.0 625.6)"/>
<ellipse cx="1134.7" cy="571.9" rx="5.0" ry="6.7" opacity="0.85" transform="rotate(0 1134.7 571.9)"/>
</g>
<g stroke="#4a5f14" fill="none" stroke-linecap="round" opacity=".85">
<path d="M1081.0 706.0 L1034.1 635.6 L1000.6 595.4 L970.4 568.6" stroke-width="3"/>
<path d="M1060.9 692.6 L1000.6 672.5 L950.3 665.8 L910.1 662.4" stroke-width="1.6"/>
<path d="M1057.6 712.7 L1000.6 712.7 L953.6 699.3 L913.4 719.4" stroke-width="1.4"/>
<path d="M1060.9 732.8 L1020.7 779.8 L983.8 809.9 L946.9 826.7" stroke-width="2.6"/>
<path d="M1067.6 746.3 L1050.9 793.2 L1040.8 846.8" stroke-width="1.8"/>
<path d="M1074.3 753.0 L1074.3 803.2 L1071.0 853.5" stroke-width="1.6"/>
<path d="M1087.7 753.0 L1101.1 799.9 L1107.8 846.8" stroke-width="1.6"/>
<path d="M1101.1 742.9 L1134.7 789.8 L1161.5 830.1" stroke-width="1.8"/>
<path d="M1107.8 726.1 L1154.8 742.9 L1195.0 766.4 L1218.5 779.8" stroke-width="1.4"/>
<path d="M1114.5 696.0 L1168.2 694.3 L1231.9 692.6" stroke-width="1.8"/>
<path d="M1052.5 541.8 L1052.5 675.9" stroke-width="2.6"/>
<path d="M1017.3 551.8 L1017.3 625.6 L1037.4 635.6 L1040.8 685.9" stroke-width="1.6"/>
<path d="M1101.1 545.1 L1104.5 592.0 L1101.1 669.2" stroke-width="1.4"/>
<path d="M1134.7 551.8 L1114.5 625.6 L1101.1 675.9" stroke-width="1.4"/>
<path d="M1184.9 571.9 L1154.8 618.9 L1114.5 672.5" stroke-width="1.6"/>
<path d="M933.5 625.6 L1010.6 659.1 L1060.9 682.6" stroke-width="1.4"/>
<path d="M940.2 753.0 L1000.6 756.3 L1060.9 739.5" stroke-width="1.4"/>
<path d="M1010.6 840.1 L1040.8 779.8 L1067.6 746.3" stroke-width="1.6"/>
<path d="M1131.3 836.8 L1107.8 786.5 L1091.1 749.6" stroke-width="1.4"/>
<path d="M1221.8 655.7 L1188.3 685.9 L1174.9 712.7 L1181.6 759.7 L1201.7 793.2" stroke-width="1.6"/>
</g>
<g stroke="#3c7a06" stroke-width=".8" opacity=".45">
<line x1="919.7" y1="536.7" x2="919.7" y2="861.3"/>
<line x1="909.2" y1="546.2" x2="1233.8" y2="546.2"/>
<line x1="944.9" y1="536.7" x2="944.9" y2="861.3"/>
<line x1="909.2" y1="568.9" x2="1233.8" y2="568.9"/>
<line x1="967.4" y1="536.7" x2="967.4" y2="861.3"/>
<line x1="909.2" y1="593.9" x2="1233.8" y2="593.9"/>
<line x1="987.7" y1="536.7" x2="987.7" y2="861.3"/>
<line x1="909.2" y1="617.9" x2="1233.8" y2="617.9"/>
<line x1="1010.8" y1="536.7" x2="1010.8" y2="861.3"/>
<line x1="909.2" y1="640.6" x2="1233.8" y2="640.6"/>
<line x1="1034.1" y1="536.7" x2="1034.1" y2="861.3"/>
<line x1="909.2" y1="661.8" x2="1233.8" y2="661.8"/>
<line x1="1059.5" y1="536.7" x2="1059.5" y2="861.3"/>
<line x1="909.2" y1="689.4" x2="1233.8" y2="689.4"/>
<line x1="1080.8" y1="536.7" x2="1080.8" y2="861.3"/>
<line x1="909.2" y1="708.9" x2="1233.8" y2="708.9"/>
<line x1="1107.0" y1="536.7" x2="1107.0" y2="861.3"/>
<line x1="909.2" y1="736.5" x2="1233.8" y2="736.5"/>
<line x1="1129.9" y1="536.7" x2="1129.9" y2="861.3"/>
<line x1="909.2" y1="756.3" x2="1233.8" y2="756.3"/>
<line x1="1155.5" y1="536.7" x2="1155.5" y2="861.3"/>
<line x1="909.2" y1="777.4" x2="1233.8" y2="777.4"/>
<line x1="1178.0" y1="536.7" x2="1178.0" y2="861.3"/>
<line x1="909.2" y1="802.1" x2="1233.8" y2="802.1"/>
<line x1="1196.9" y1="536.7" x2="1196.9" y2="861.3"/>
<line x1="909.2" y1="824.2" x2="1233.8" y2="824.2"/>
<line x1="1221.1" y1="536.7" x2="1221.1" y2="861.3"/>
<line x1="909.2" y1="851.6" x2="1233.8" y2="851.6"/>
</g>
</g>
</svg>
<div class="ctl" style="left:13px;top:14.5px;width:189.5px;height:38.5px">
 <i class="abs" style="left:37.5px;top:0;width:1px;height:100%;background:#e6e6e6"></i><i class="abs" style="left:75.5px;top:0;width:1px;height:100%;background:#e6e6e6"></i><i class="abs" style="left:113.5px;top:0;width:1px;height:100%;background:#e6e6e6"></i><i class="abs" style="left:151px;top:0;width:1px;height:100%;background:#e6e6e6"></i>
 <svg class="abs" style="left:0;top:0" width="190" height="39" viewBox="0 0 190 39">
  <g fill="none" stroke="#222" stroke-width="1.5" stroke-linecap="round" stroke-linejoin="round"><path d="M14.5 20.5 L11 16.5 Q9.5 14.5 11.5 14 Q13 14 14.5 16 L14.5 12 Q15 10 16.5 11.5 L17 15 L17.3 10.5 Q18.5 8.5 19.6 10.5 L19.8 15 L20.6 11 Q22 9.5 22.8 11.5 L22.6 16 L23.8 13.5 Q25.3 12.8 25.4 14.8 Q25.5 20 23.5 23.5 L22.8 27.5 M15.5 27.5 L15 24.5 Q13 22.5 11.5 20.5"/></g>
  <path d="M56.5 9.5 a6.6 6.6 0 0 1 6.6 6.6 c0 3.5 -4 6 -5.4 9.2 l0 3.8 a1.2 1.2 0 0 1 -2.4 0 l0 -3.8 c-1.4 -3.2 -5.4 -5.7 -5.4 -9.2 a6.6 6.6 0 0 1 6.6 -6.600 z" fill="#b3b3b3" stroke="#8e8e8e" stroke-width="1"/>
  <path d="M84.5 27.5 L91.5 19 L96.5 23 L104.5 12.500" fill="none" stroke="#8e8e8e" stroke-width="1.8" stroke-linejoin="round" stroke-linecap="round"/>
  <path d="M123.500 11.500 L131.500 18 L139.500 14.500 L138 22.500 L127 27 Z" fill="#b3b3b3" stroke="#8e8e8e" stroke-width="1.2" stroke-linejoin="round"/>
  <rect x="163" y="12" width="15" height="15" rx="1" fill="#b3b3b3" stroke="#9a9a9a" stroke-width="1.200"/>
 </svg>
</div>
<div class="ctl" style="left:13px;top:74.500px;width:38.500px;height:76.500px;border-radius:3px">
 <i class="abs" style="left:7px;top:37.5px;width:28px;height:1px;background:#e6e6e6"></i>
 <i class="abs" style="left:11.300px;top:16.700px;width:16px;height:3.400px;background:#666"></i><i class="abs" style="left:17.600px;top:10.400px;width:3.400px;height:16px;background:#666"></i>
 <i class="abs" style="left:11.300px;top:55.500px;width:16px;height:3.600px;background:#666"></i>
</div>
<div class="ctl" style="left:1588.500px;top:14.500px;width:148.500px;height:39px"><span class="abs" style="left:11px;top:10.5px;font-size:14.800px;color:#111">Layers</span></div>
<div class="abs" style="left:1312px;top:581px;height:19px;width:129.500px;background:rgba(255,255,255,.7)"></div>
<div class="abs" style="left:1443.500px;top:581px;height:19px;width:118px;background:rgba(255,255,255,.7)"></div>
<div class="abs" style="left:1563.500px;top:581px;height:19px;width:153px;background:rgba(255,255,255,.7)"></div>
<div class="abs" style="left:1718.500px;top:581px;height:19px;width:30px;background:rgba(255,255,255,.7)"></div>
<div class="abs" style="left:1319.500px;top:583.5px;font-size:13.5px;color:#000;white-space:nowrap">Keyboard shortcuts</div>
<div class="abs" style="left:1453px;top:583.5px;font-size:13.5px;color:#000;white-space:nowrap">Map data ©2023</div>
<div class="abs" style="left:1570px;top:583.5px;font-size:13.5px;color:#000;white-space:nowrap">5 km</div>
<div class="abs" style="left:1604.500px;top:588.5px;width:103px;height:6.500px;border:2.200px solid #444;border-top:none"></div>
<div class="abs" style="left:1726px;top:583.5px;font-size:13.5px;color:#000;white-space:nowrap">Terms of Use</div>
<svg class="abs" style="left:8px;top:562px" width="100" height="38" viewBox="0 0 100 38"><text x="5.5" y="27.3" font-family="Liberation Sans, sans-serif" font-size="26.5" font-weight="bold" textLength="76" lengthAdjust="spacingAndGlyphs" fill="#fff" stroke="#6f8c7a" stroke-width="3" stroke-linejoin="round" paint-order="stroke">Google</text></svg>
 </div>
</div>
</body></html>
